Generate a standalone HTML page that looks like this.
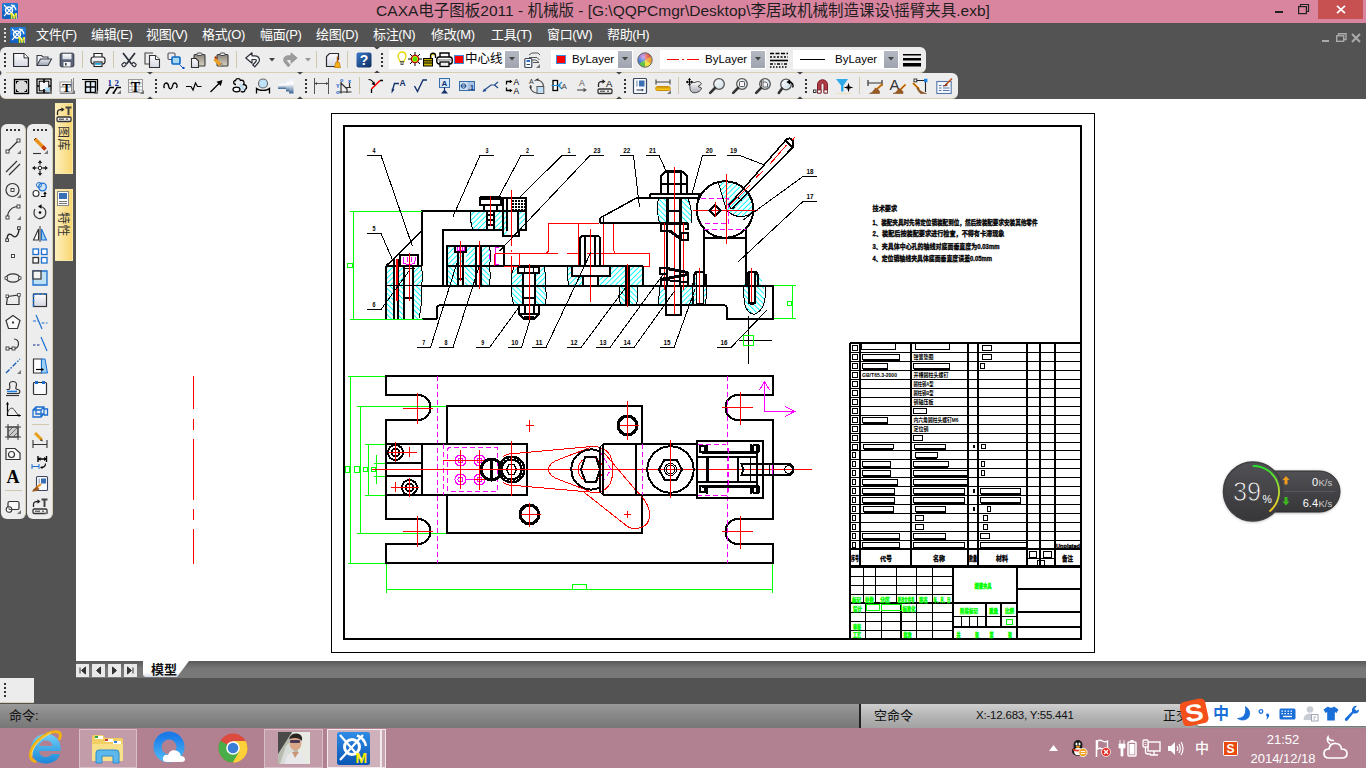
<!DOCTYPE html>
<html lang="zh-CN">
<head>
<meta charset="utf-8">
<title>CAXA电子图板2011 - 机械版</title>
<style>
*{margin:0;padding:0;box-sizing:border-box}
html,body{width:1366px;height:768px;overflow:hidden;background:#535353;font-family:"Liberation Sans","Noto Sans CJK SC",sans-serif}
.abs{position:absolute}
#title{position:absolute;left:0;top:0;width:1366px;height:23px;background:#d9859f}
#title .txt{position:absolute;left:0;width:1366px;top:0;height:23px;line-height:22px;text-align:center;font-size:15.5px;color:#1e1e1e;white-space:nowrap}
#menu{position:absolute;left:0;top:23px;width:1366px;height:24px;background:#535353;color:#fff;font-size:13px}
#menu span{position:absolute;top:0;line-height:23px;white-space:nowrap;letter-spacing:-.35px}
.tb{position:absolute;background:#ededed;border-radius:5px}
#canvas{position:absolute;left:76px;top:99px;width:1290px;height:562px;background:#fff}
#left{position:absolute;left:0;top:99px;width:76px;height:580px;background:#535353}
#tabs{position:absolute;left:76px;top:661px;width:1290px;height:17px;background:linear-gradient(#5a5a5a,#777 45%,#787878)}
#dark{position:absolute;left:0;top:678px;width:1366px;height:26px;background:#535353}
#cmd{position:absolute;left:0;top:704px;width:1366px;height:24px;background:linear-gradient(#9a9a9a,#8a8a8a 40%,#777)}
#task{position:absolute;left:0;top:728px;width:1366px;height:40px;background:#b18191}
</style>
</head>
<body>
<div id="canvas"></div><div id="left"></div>
<svg class="abs" style="left:76px;top:99px" width="1290" height="562" viewBox="76 99 1290 562" shape-rendering="crispEdges" font-family="Liberation Sans,Noto Sans CJK SC,sans-serif">
<style>
.k2{stroke:#000;stroke-width:2;fill:none}
.k3{stroke:#000;stroke-width:3;fill:none}
.kd{stroke:#000;stroke-width:1.5;fill:none}
.k1{stroke:#000;stroke-width:1;fill:none}
.r{stroke:#f00;stroke-width:1;fill:none}
.g{stroke:#0f0;stroke-width:1;fill:none}
.m{stroke:#f0f;stroke-width:1;fill:none;stroke-dasharray:5 3}
.ms{stroke:#f0f;stroke-width:1;fill:none}
.c{stroke:#0ff;stroke-width:1;fill:none}
.w{fill:#fff;stroke:none}
</style>
<defs>
<pattern id="h1" width="3.7" height="3.7" patternUnits="userSpaceOnUse" patternTransform="rotate(-45)"><rect width="3.7" height="3.7" fill="#fff"/><path d="M0 .5H3.7" stroke="#0ff" stroke-width="1"/></pattern>
<pattern id="h2" width="3.7" height="3.7" patternUnits="userSpaceOnUse" patternTransform="rotate(45)"><rect width="3.7" height="3.7" fill="#fff"/><path d="M0 .5H3.7" stroke="#0ff" stroke-width="1"/></pattern>
<pattern id="kn" width="3" height="3" patternUnits="userSpaceOnUse"><rect width="3" height="3" fill="#000"/><path d="M0 1.500L1.500 0L3 1.500L1.500 3Z" fill="#fff"/></pattern>
</defs>
<rect x="331.5" y="113.5" width="763" height="539" class="k1"/>
<rect x="344" y="126" width="737" height="513" class="k2"/>
<path class="r" d="M193.5 375.8 L193.5 409.3"/>
<path class="r" d="M193.5 418.7 L193.5 429.6"/>
<path class="r" d="M193.5 438.8 L193.5 499.8"/>
<path class="r" d="M193.5 509 L193.5 519.9"/>
<path class="r" d="M193.5 529 L193.5 564"/>
<path d="M386 266H394V285H386Z M398 266H404V285H398Z M413 266H420Q423 276 421 285H413Z" fill="url(#h1)" stroke="none" />
<path d="M386 286H394V319H386Z M398 286H404V319H398Z M413 286H421Q422 300 418 319H413Z" fill="url(#h2)" stroke="none" />
<path d="M471 212H487V230H473Q470 221 471 212Z M494 212H502V230H494Z M502 212H507V236H502Z M518 211H525V230H519V236H518Z" fill="url(#h1)" stroke="none" />
<path d="M447 246H455V252H462V266H447Z M466 252V246H476V266H466Z M481 246H489Q492 256 489 266H481Z" fill="url(#h1)" stroke="none" />
<path d="M447 267H458V285H447Z M465 267H476V285H465Z M481 267H489Q491 276 489 285H481Z" fill="url(#h2)" stroke="none" />
<path d="M514 267H518V273H523V285H512Q510 276 514 267Z M539 267H544Q546 276 545 285H535V273H539Z" fill="url(#h1)" stroke="none" />
<path d="M512 286H523V305H514Q511 296 512 286Z M535 286H545Q547 296 545 305H535Z" fill="url(#h2)" stroke="none" />
<path d="M568 267H572V276H583V285H569Q567 276 568 267Z M610 267H626V285H598V276H610Z M629 267H643V285H629Z" fill="url(#h1)" stroke="none" />
<path d="M620 286H626V305H621Q618 296 620 286Z M629 286H637Q639 296 636 305H629Z" fill="url(#h2)" stroke="none" />
<path d="M659 198H667V223H660Q656 210 659 198Z M681 198H688Q693 210 692 223H681Z" fill="url(#h2)" stroke="none" />
<path d="M660 286H666V305H659Z M681 286H692V305H681Z" fill="url(#h1)" stroke="none" />
<path d="M694 274H696V303H699.500V305H694Q692 290 694 274Z M704 274H706Q708 290 705 305H700.500V303H704Z" fill="url(#h1)" stroke="none" />
<path d="M746 274H749V303H755V274H758Q766 285 764 303Q760 313 751 315Q744 308 744 295Q744 282 746 274Z" fill="url(#h2)" stroke="none" />
<clipPath id="camclip"><circle cx="725" cy="209.500" r="27.500"/></clipPath>
<path d="M726.500 210.500L718.500 181H760V213Q745 222 726.500 210.500Z" fill="url(#h1)" stroke="none" clip-path="url(#camclip)"/>
<path class="g" d="M772 285.5 L796 285.5"/>
<path class="g" d="M772 318.5 L796 318.5"/>
<path class="g" d="M792.5 285 L792.5 319"/>
<rect class="g" x="787.5" y="301.5" width="4" height="4" />
<path class="kd" d="M386 266 L422 231"/>
<path class="k2" d="M422 266 L422 211 L526 211"/>
<path class="k1" d="M421 267Q424 276 421.500 285Q423 300 419 318" />
<path class="k2" d="M422 266 L400 266"/>
<path class="k2" d="M386 266 L386 319"/>
<path class="k2" d="M386 266 L400 266"/>
<path class="k2" d="M443 285 L443 230 L502 230"/>
<path class="k2" d="M422 319 L437 319"/>
<path class="k2" d="M400 266 L400 255 L418 255 L418 266"/>
<path class="ms" d="M403 257V261Q403 264 406 264H412Q415 264 415 261V257 M407 257V262 M411 257V262" />
<path class="k2" d="M404 266 L404 319"/>
<path class="k2" d="M413 266 L413 319"/>
<path class="k2" d="M404 297.5 L413 297.5"/>
<path class="k1" d="M402.5 268.5 L415 268.5"/>
<path class="r" d="M409.5 253 L409.5 301"/>
<path class="k2" d="M394 259 L394 319"/>
<path class="k2" d="M398 259 L398 319"/>
<path class="r" d="M396 259 L396 301"/>
<path class="r" d="M397 259 L397 301"/>
<path class="k1" d="M386 285.5 L421 285.5"/>
<path class="k2" d="M421 286 L773 286"/>
<path class="k2" d="M773 285 L773 319 L727 319 L727 308"/>
<path class="k2" d="M727 309Q727 305 723 305H441Q437 305 437 309V319" />
<path class="k2" d="M447 285 L447 246 L504 246 L504 266"/>
<path class="k2" d="M447 266 L643 266"/>
<path class="k2" d="M455 246 L455 252 L466 252 L466 246"/>
<path class="k2" d="M458 252 L458 285"/>
<path class="k2" d="M463 252 L463 285"/>
<path class="k2" d="M458 279 L463 279"/>
<path class="ms" d="M457 247V250H464V247M459 247V250M462 247V250" />
<path class="r" d="M460.5 241 L460.5 281"/>
<path class="k2" d="M476 246 L476 285"/>
<path class="k2" d="M481 246 L481 285"/>
<path class="r" d="M479.5 241 L479.5 289"/>
<path class="ms" d="M495.5 247.5 L495.5 264.5"/>
<path class="ms" d="M495 247.5 L499 247.5"/>
<path class="ms" d="M495 264.5 L499 264.5"/>
<path class="m" d="M489.5 246 L489.5 266"/>
<path class="k2" d="M480 199 L501 199 L501 205 L480 205 L480 199"/>
<path class="k2" d="M480 199Q480 197 482 197H499Q501 197 501 199" />
<path class="k2" d="M484 205 L484 211"/>
<path class="k2" d="M497 205 L497 211"/>
<path class="k2" d="M487 211 L487 230"/>
<path class="k2" d="M494 211 L494 230"/>
<path class="k2" d="M487 215 L494 215"/>
<path class="k2" d="M487 220 L494 220"/>
<path class="k2" d="M487 225 L494 225"/>
<path class="r" d="M490.5 196 L490.5 226"/>
<path class="k2" d="M502 198 L526 198 L526 230 L519 230 L519 236 L503 236 L503 198"/>
<rect x="512" y="199" width="13" height="11" fill="url(#kn)"/>
<path class="k2" d="M507 198 L507 231"/>
<path class="k2" d="M518 211 L518 231"/>
<path class="k2" d="M512 211 L525 211"/>
<path class="r" d="M511.5 190 L511.5 246"/>
<path class="r" d="M511.5 250 L511.5 252"/>
<path class="r" d="M511.5 256 L511.5 273"/>
<path class="r" d="M548.5 251.5 L548.5 223.5 L599 223.5"/>
<path class="r" d="M578.5 223.5 L578.5 265"/>
<path class="r" d="M603.5 223.5 L603.5 265"/>
<path class="r" d="M613.5 223.5 L613.5 251"/>
<path class="r" d="M548.500 250L546.500 253.500 M613.500 250L615.500 253.500" />
<path class="r" d="M494.5 253.5 L557.5 253.5"/>
<path class="r" d="M567 253.5 L578 253.5"/>
<path class="r" d="M587 253.5 L649.5 253.5 L649.5 266.5 L643 266.5"/>
<path class="r" d="M494.5 253.5 L494.5 266"/>
<path class="r" d="M503.5 266.5 L519.5 266.5 L519.5 253.5"/>
<path class="k2" d="M580 266V239Q580 236 583 236H597Q600 236 600 239V266 M585 237V266 M594.500 237V266" />
<path class="r" d="M590.5 229 L590.5 302"/>
<path class="k2" d="M572 266 L572 276 L610 276 L610 266"/>
<path class="k2" d="M583 276 L583 285"/>
<path class="k2" d="M598 276 L598 285"/>
<path class="k2" d="M643 266 L643 285"/>
<path class="k2" d="M626 266 L626 305"/>
<path class="k2" d="M629 266 L629 305"/>
<path class="r" d="M627.5 264 L627.5 307"/>
<path class="k2" d="M518 267 L539 267 L539 273 L518 273 L518 267"/>
<path class="k1" d="M524.5 267 L524.5 273"/>
<path class="k1" d="M533.5 267 L533.5 273"/>
<path class="k2" d="M523 273 L523 305"/>
<path class="k2" d="M535 273 L535 305"/>
<path class="k2" d="M523 297.5 L535 297.5"/>
<path class="k2" d="M519 305 L519 314 L524 319 L534 319 L539 314 L539 305"/>
<path class="k2" d="M524.5 305 L524.5 314"/>
<path class="k2" d="M534 305 L534 314"/>
<path class="k2" d="M519 314 L539 314"/>
<path class="k2" d="M524 317H534" />
<path class="r" d="M529.5 264 L529.5 322"/>
<path class="k2" d="M600 223 L600 218"/>
<path class="kd" d="M600 218 L636.5 198"/>
<path class="k2" d="M636 198 L650 198"/>
<path class="k2" d="M600 223 L660 223"/>
<path class="k1" d="M603.5 217 L603.5 223"/>
<path class="k1" d="M658.500 198Q656 210 659.500 223 M688 198Q692 210 692 223" />
<path class="k2" d="M650 194 L699 194 L699 198 L650 198 L650 194"/>
<path class="k2" d="M661 194V176L665 172H683L687 176V194 M667.500 172V194 M681 172V194 M661 183.500H687" />
<path class="k3" d="M666 171 L682 171"/>
<path class="r" d="M674.5 167 L674.5 316"/>
<path class="k3" d="M667.5 198 L667.5 223"/>
<path class="k3" d="M680.5 198 L680.5 223"/>
<path class="k2" d="M667 223 L667 286"/>
<path class="k2" d="M680 223 L680 286"/>
<path class="k3" d="M660 223.5 L688 223.5"/>
<path class="k2" d="M667 211 L681 211"/>
<path class="r" d="M664.5 223 L664.5 290"/>
<path class="r" d="M683.5 223 L683.5 290"/>
<path class="k2" d="M666 286 L666 315 L681 315 L681 286"/>
<path class="k2" d="M660.500 223V231H670 M687.500 223V229H685" />
<path class="k3" d="M669 230.500L680.500 238.500" />
<rect class="k2" x="681" y="233" width="7" height="7" fill="url(#h1)"/>
<rect class="k2" x="660" y="267.5" width="7" height="6.5" fill="url(#h1)"/>
<path class="k3" d="M667 268.500L687.500 272.500" />
<path class="k3" d="M687.500 274.500L661 279.500" />
<path class="k2" d="M661 279.500L687.500 282.500" />
<path class="k2" d="M687.5 272 L687.5 286"/>
<path class="k2" d="M660.5 278 L660.5 286"/>
<circle class="k2" cx="725" cy="209.5" r="28.3" />
<path class="k2" d="M704 229 L704 286"/>
<path class="k2" d="M746 229 L746 286"/>
<path class="k2" d="M704 238 L746 238"/>
<path class="k1" d="M726.5 210.5 L718.5 183"/>
<path class="k1" d="M726.500 210.500Q740 222 753 212" />
<path class="m" d="M700.5 198.5 L728.5 198.5 L728.5 223.5 L701 223.5"/>
<path class="m" d="M704 229.5 L746 229.5"/>
<path class="r" d="M726.5 174 L726.5 244"/>
<path class="r" d="M693 210.5 L758 210.5"/>
<path class="k2" d="M715 205L720.500 210.500L715 216L709.500 210.500Z" fill="url(#h2)" stroke-width="1.500"/>
<path class="r" d="M715.5 202 L715.5 217"/>
<path class="kd" d="M729 205 L785.5 140.5"/>
<path class="kd" d="M733 208 L792.5 147.5"/>
<path class="k2" d="M785.500 140.500Q790 136 793 141L792.500 148 M785.500 140.500L792.500 148" />
<path class="k1" d="M729 205L731 209L734 208.500" />
<path class="r" d="M730 205L750 185M756 177.500L763.500 170.500M770 164L786.500 145M792.500 140L794.500 137.500" />
<path class="k1" d="M738 197.5 L742 201"/>
<path class="k2" d="M694 286V275L696 272H703L705 275V286" />
<path class="k1" d="M696.500 273V303H703.500V273 M696.500 303L700 305L703.500 303" />
<path class="r" d="M699.5 268 L699.5 303"/>
<path class="k2" d="M747 286V275L749 272H756L758 275V286" />
<path class="k2" d="M749 273V303H755V273" />
<path class="k1" d="M749 303L752 305L755 303" />
<path class="r" d="M751.5 268 L751.5 302"/>
<path class="k1" d="M744 286Q743 300 746 308Q750 315 755 314Q764 310 765 298V286" />
<path class="g" d="M350 211.5 L422 211.5"/>
<path class="g" d="M350 319.5 L423 319.5"/>
<path class="g" d="M353.5 211 L353.5 319"/>
<rect class="g" x="347.5" y="263.5" width="5" height="4" />
<path class="k1" d="M489 246Q492.500 256 489 266Q491.500 276 489 285" />
<path class="k1" d="M514 267Q510 276 512 285Q510.500 296 514 305 M544 267Q546.500 276 545 285Q547.500 296 545 305" />
<path class="k1" d="M568 267Q566.500 276 569 285" />
<path class="k1" d="M620 286Q617.500 296 621 305 M637 286Q639.500 296 636 305" />
<path class="k1" d="M660 286Q658.500 296 659 305 M692 286Q693 296 692 305" />
<path class="k1" d="M694 274Q691.500 290 694 305 M706 274Q708.500 290 705 305" />
<path class="k1" d="M471 212Q469.500 221 473 230" />
<path class="k1" d="M367 155.5 L381 155.5"/>
<path class="k1" d="M381 155.5 L412.5 246.5"/>
<text x="374" y="153" font-size="7" fill="#000" text-anchor="middle" font-weight="bold" textLength="3" lengthAdjust="spacingAndGlyphs">4</text>
<path class="k1" d="M480 155.5 L494 155.5"/>
<path class="k1" d="M480 155.5 L453 216.5"/>
<text x="487" y="153" font-size="7" fill="#000" text-anchor="middle" font-weight="bold" textLength="3" lengthAdjust="spacingAndGlyphs">3</text>
<path class="k1" d="M521 155.5 L534 155.5"/>
<path class="k1" d="M521 155.5 L498 198.5"/>
<text x="527.5" y="153" font-size="7" fill="#000" text-anchor="middle" font-weight="bold" textLength="3" lengthAdjust="spacingAndGlyphs">2</text>
<path class="k1" d="M562 155.5 L576 155.5"/>
<path class="k1" d="M562 155.5 L520 197"/>
<text x="569" y="153" font-size="7" fill="#000" text-anchor="middle" font-weight="bold" textLength="3" lengthAdjust="spacingAndGlyphs">1</text>
<path class="k1" d="M590 155.5 L604 155.5"/>
<path class="k1" d="M590 155.5 L499.5 251"/>
<text x="597" y="153" font-size="7" fill="#000" text-anchor="middle" font-weight="bold" textLength="7" lengthAdjust="spacingAndGlyphs">23</text>
<path class="k1" d="M620 155.5 L633.5 155.5"/>
<path class="k1" d="M633.5 155.5 L639.5 207.5"/>
<text x="626.75" y="153" font-size="7" fill="#000" text-anchor="middle" font-weight="bold" textLength="7" lengthAdjust="spacingAndGlyphs">22</text>
<path class="k1" d="M646 155.5 L659 155.5"/>
<path class="k1" d="M659 155.5 L666 171"/>
<text x="652.5" y="153" font-size="7" fill="#000" text-anchor="middle" font-weight="bold" textLength="7" lengthAdjust="spacingAndGlyphs">21</text>
<path class="k1" d="M702.5 155.5 L716 155.5"/>
<path class="k1" d="M702.5 155.5 L692 194"/>
<text x="709.25" y="153" font-size="7" fill="#000" text-anchor="middle" font-weight="bold" textLength="7" lengthAdjust="spacingAndGlyphs">20</text>
<path class="k1" d="M727 155.5 L740 155.5"/>
<path class="k1" d="M740 155.5 L763 164.5"/>
<text x="733.5" y="153" font-size="7" fill="#000" text-anchor="middle" font-weight="bold" textLength="7" lengthAdjust="spacingAndGlyphs">19</text>
<path class="k1" d="M803 176.5 L817 176.5"/>
<path class="k1" d="M803 176.5 L743 220"/>
<text x="810" y="174" font-size="7" fill="#000" text-anchor="middle" font-weight="bold" textLength="7" lengthAdjust="spacingAndGlyphs">18</text>
<path class="k1" d="M803 201.5 L817 201.5"/>
<path class="k1" d="M803 201.5 L738.5 261.5"/>
<text x="810" y="199" font-size="7" fill="#000" text-anchor="middle" font-weight="bold" textLength="7" lengthAdjust="spacingAndGlyphs">17</text>
<path class="k1" d="M367 233.5 L381 233.5"/>
<path class="k1" d="M381 233.5 L392 258.5"/>
<text x="374" y="231" font-size="7" fill="#000" text-anchor="middle" font-weight="bold" textLength="3" lengthAdjust="spacingAndGlyphs">5</text>
<path class="k1" d="M367 309.5 L381 309.5"/>
<path class="k1" d="M381 309.5 L409 271"/>
<text x="374" y="307" font-size="7" fill="#000" text-anchor="middle" font-weight="bold" textLength="3" lengthAdjust="spacingAndGlyphs">6</text>
<path class="k1" d="M417 347.5 L430.5 347.5"/>
<path class="k1" d="M430.5 347.5 L458.5 258"/>
<text x="423.75" y="345" font-size="7" fill="#000" text-anchor="middle" font-weight="bold" textLength="3" lengthAdjust="spacingAndGlyphs">7</text>
<path class="k1" d="M439 347.5 L453 347.5"/>
<path class="k1" d="M453 347.5 L479.5 265.5"/>
<text x="446" y="345" font-size="7" fill="#000" text-anchor="middle" font-weight="bold" textLength="3" lengthAdjust="spacingAndGlyphs">8</text>
<path class="k1" d="M476 347.5 L489.5 347.5"/>
<path class="k1" d="M489.5 347.5 L518 308.5"/>
<text x="482.75" y="345" font-size="7" fill="#000" text-anchor="middle" font-weight="bold" textLength="3" lengthAdjust="spacingAndGlyphs">9</text>
<path class="k1" d="M508 347.5 L521.5 347.5"/>
<path class="k1" d="M521.5 347.5 L530 320"/>
<text x="514.75" y="345" font-size="7" fill="#000" text-anchor="middle" font-weight="bold" textLength="7" lengthAdjust="spacingAndGlyphs">10</text>
<path class="k1" d="M532 347.5 L546 347.5"/>
<path class="k1" d="M546 347.5 L591 252"/>
<text x="539" y="345" font-size="7" fill="#000" text-anchor="middle" font-weight="bold" textLength="7" lengthAdjust="spacingAndGlyphs">11</text>
<path class="k1" d="M567 347.5 L581 347.5"/>
<path class="k1" d="M581 347.5 L626.5 286.5"/>
<text x="574" y="345" font-size="7" fill="#000" text-anchor="middle" font-weight="bold" textLength="7" lengthAdjust="spacingAndGlyphs">12</text>
<path class="k1" d="M596 347.5 L610 347.5"/>
<path class="k1" d="M610 347.5 L665 272"/>
<text x="603" y="345" font-size="7" fill="#000" text-anchor="middle" font-weight="bold" textLength="7" lengthAdjust="spacingAndGlyphs">13</text>
<path class="k1" d="M620 347.5 L634 347.5"/>
<path class="k1" d="M634 347.5 L674.5 291"/>
<text x="627" y="345" font-size="7" fill="#000" text-anchor="middle" font-weight="bold" textLength="7" lengthAdjust="spacingAndGlyphs">14</text>
<path class="k1" d="M660 347.5 L674 347.5"/>
<path class="k1" d="M674 347.5 L695 289.5"/>
<text x="667" y="345" font-size="7" fill="#000" text-anchor="middle" font-weight="bold" textLength="7" lengthAdjust="spacingAndGlyphs">15</text>
<path class="k1" d="M717 347.5 L731 347.5"/>
<path class="k1" d="M731 347.5 L766.5 310.5"/>
<text x="724" y="345" font-size="7" fill="#000" text-anchor="middle" font-weight="bold" textLength="7" lengthAdjust="spacingAndGlyphs">16</text>
<path class="k1" d="M748.5 316 L748.5 364"/>
<path class="k1" d="M738.5 340.5 L772 340.5"/>
<rect class="g" x="743.5" y="335.5" width="10" height="10" />
<path class="g" d="M348 376.5 L386 376.5"/>
<path class="g" d="M348 563.5 L386 563.5"/>
<path class="g" d="M350.5 376 L350.5 563"/>
<path class="g" d="M357 406.5 L457 406.5"/>
<path class="g" d="M357 533.5 L447 533.5"/>
<path class="g" d="M360.5 406 L360.5 533"/>
<path class="g" d="M365 444.5 L386 444.5"/>
<path class="g" d="M365 495.5 L386 495.5"/>
<path class="g" d="M368.5 444 L368.5 495"/>
<path class="g" d="M374 463.5 L386 463.5"/>
<path class="g" d="M374 476.5 L386 476.5"/>
<path class="g" d="M376.5 455 L376.5 484"/>
<rect class="g" x="345.5" y="466.5" width="4" height="6" />
<rect class="g" x="354.5" y="466.5" width="5" height="6" />
<rect class="g" x="363.5" y="467.5" width="4" height="4" />
<rect class="g" x="371.5" y="467.5" width="4" height="4" />
<path class="g" d="M386.5 563 L386.5 593"/>
<path class="g" d="M772.5 563 L772.5 593"/>
<path class="g" d="M386 589.5 L773 589.5"/>
<rect class="g" x="572.5" y="584.5" width="14" height="5" />
<path class="k2" d="M386 376H773V395H738A12.500 12.500 0 0 0 738 420H773V519H738A12.500 12.500 0 0 0 738 544H773V563H386V544H418A12.500 12.500 0 0 0 418 519H386V420H418A12.500 12.500 0 0 0 418 395H386Z" />
<path class="r" d="M417.5 392.5 L417.5 423.5"/>
<path class="r" d="M402.5 408.5 L432.5 408.5"/>
<path class="r" d="M417.5 515.5 L417.5 546.5"/>
<path class="r" d="M402.5 531.5 L432.5 531.5"/>
<path class="r" d="M740.5 391.5 L740.5 424.5"/>
<path class="r" d="M721.5 407.5 L752.5 407.5"/>
<path class="r" d="M740.5 515.5 L740.5 548.5"/>
<path class="r" d="M721.5 531.5 L752.5 531.5"/>
<path class="m" d="M437.5 376 L437.5 563"/>
<path class="m" d="M727.5 376 L727.5 563"/>
<path class="k2" d="M447 444V406H642V444 M642 495V533H447V495" />
<path class="k2" d="M386 444 L527 444 L527 495 L386 495"/>
<path class="k2" d="M422 444 L422 495"/>
<path class="k2" d="M386 463 L422 463"/>
<path class="k2" d="M386 475.5 L422 475.5"/>
<circle class="k2" cx="395.5" cy="452.5" r="7.5" />
<circle class="k2" cx="395.5" cy="452.5" r="3.8" />
<circle class="k2" cx="409.5" cy="487.5" r="7.5" />
<circle class="k2" cx="409.5" cy="487.5" r="3.8" />
<path class="r" d="M388 452.5 L417 452.5"/>
<path class="r" d="M395.5 442 L395.5 462"/>
<path class="r" d="M409.5 447 L409.5 457"/>
<path class="r" d="M391 487.5 L419 487.5"/>
<path class="r" d="M409.5 478 L409.5 497"/>
<path class="r" d="M395.5 482 L395.5 492"/>
<path class="m" d="M447.500 450Q447.500 447.500 450 447.500H497V491.500H450Q447.500 491.500 447.500 489Z" />
<path class="m" d="M443.5 444 L443.5 495"/>
<circle class="ms" cx="460.5" cy="460.5" r="5.5" />
<circle class="ms" cx="460.5" cy="460.5" r="2.5" />
<circle class="ms" cx="479.5" cy="460.5" r="5.5" />
<circle class="ms" cx="479.5" cy="460.5" r="2.5" />
<circle class="ms" cx="460.5" cy="479.5" r="5.5" />
<circle class="ms" cx="460.5" cy="479.5" r="2.5" />
<circle class="ms" cx="479.5" cy="479.5" r="5.5" />
<circle class="ms" cx="479.5" cy="479.5" r="2.5" />
<path class="r" d="M460.5 450 L460.5 489"/>
<path class="r" d="M479.5 450 L479.5 490"/>
<path class="r" d="M443 460.5 L484 460.5"/>
<path class="r" d="M470 479.5 L490 479.5"/>
<path class="ms" d="M466 479.5 L474 479.5"/>
<circle class="k3" cx="491.5" cy="469.5" r="10.5" stroke-width="2.500"/>
<path class="k3" d="M491.5 459 L491.5 480"/>
<circle class="k2" cx="511.5" cy="469.5" r="13" />
<circle class="k1" cx="511.5" cy="469.5" r="11.5" stroke-dasharray="2 1.500"/>
<circle class="k2" cx="511.5" cy="469.5" r="10" />
<path class="k1" d="M506.500 469.500L509 464.500H514L516.500 469.500L514 474.500H509Z" />
<path class="r" d="M511.5 441 L511.5 496"/>
<path class="r" d="M371.5 469.5 L810 469.5"/>
<path class="r" d="M515 453.5 L592 446.5"/>
<path class="r" d="M515 485.5 L595.5 492.5"/>
<path class="r" d="M503 456.500Q511 452 518 453.500 M503 482.500Q511 487 518 485.500" />
<path class="r" d="M592 446.500Q604 446 610 455Q616 469.500 610 484Q604 493 595.500 492.500" />
<path class="r" d="M590.500 447.500L560 459Q548.500 463 548.500 469.500Q548.500 476 560 480L590.500 491.500" />
<circle class="r" cx="590.5" cy="469.5" r="12.3" />
<path class="r" d="M603 451.5 L636 490.5"/>
<path class="r" d="M582.5 491 L625 524.5"/>
<path class="r" d="M625 524.500Q629 528.500 635 528.500Q649.500 528 649.500 514.500Q649.500 503 636 490.500" />
<path class="r" d="M624 514.5 L631 514.5"/>
<path class="r" d="M627.5 511 L627.5 518"/>
<path class="r" d="M526 425.5 L534 425.5"/>
<path class="r" d="M529.5 420 L529.5 432"/>
<path class="k2" d="M600 451.500A20 20 0 1 0 600 487.500" />
<path class="k2" d="M600 469.500L596 456.500H585.500L581 469.500L585.500 482H596Z" />
<path class="m" d="M600 451.500L611 469.500L600 486.500" />
<circle class="k3" cx="627.5" cy="425.5" r="9.3" />
<circle class="k3" cx="529.5" cy="514.5" r="9.3" />
<path class="r" d="M627.5 401 L627.5 440"/>
<path class="r" d="M620 425.5 L639 425.5"/>
<path class="r" d="M529.5 503 L529.5 527"/>
<path class="r" d="M521 514.5 L541 514.5"/>
<path class="k2" d="M603 444 L697 444"/>
<path class="k2" d="M603 495 L697 495"/>
<path class="k2" d="M603 444 L603 495"/>
<path class="k2" d="M600 447 L600 492"/>
<path class="k1" d="M600 447 L603 444"/>
<path class="k1" d="M600 492 L603 495"/>
<path class="k2" d="M635.5 444 L635.5 495"/>
<path class="m" d="M642.5 444 L642.5 495"/>
<circle class="k2" cx="670.5" cy="469.5" r="23.2" stroke-width="1.500"/>
<path class="k2" d="M659 469.500L664.500 459.500H676.500L682 469.500L676.500 479.500H664.500Z" />
<circle class="k1" cx="670.5" cy="469.5" r="6" />
<circle class="k1" cx="670.5" cy="469.5" r="4.3" />
<path class="r" d="M670.5 440 L670.5 498"/>
<rect class="k2" x="697" y="440.5" width="65.5" height="57" />
<path class="k2" d="M697 457 L758 457"/>
<path class="k3" d="M702 452.5 L758 452.5"/>
<path class="k2" d="M697 482 L758 482"/>
<path class="k3" d="M702 486 L758 486"/>
<path class="k2" d="M707 444 L707 452"/>
<path class="k2" d="M707 486 L707 494"/>
<path class="k2" d="M751 444 L751 452"/>
<path class="k2" d="M751 486 L751 494"/>
<path class="k3" d="M707 457 L707 482"/>
<path class="k2" d="M738 457 L738 482"/>
<path class="k1" d="M750.5 457 L750.5 482"/>
<path class="k2" d="M757 445 L757 494"/>
<rect class="k2" x="700" y="446" width="5" height="6" />
<rect class="k2" x="700" y="486" width="5" height="6" />
<rect class="k2" x="753" y="445" width="6" height="7" rx="2"/>
<rect class="k2" x="753" y="486" width="6" height="7" rx="2"/>
<path class="k2" d="M741.500 464H788A5.300 5.300 0 0 1 788 475H741.500L743.500 469.500Z" />
<circle class="k1" cx="788.5" cy="469.5" r="3.8" />
<path class="k1" d="M756.5 464 L756.5 475"/>
<path class="k1" d="M763.5 464 L763.5 475"/>
<path class="k1" d="M769.5 464 L769.5 475"/>
<path class="m" d="M697.500 444.500H724Q728 444.500 728 448V492Q728 495.500 724 495.500H697.500" />
<path class="ms" d="M772.5 465 L772.5 474"/>
<path class="ms" d="M764.500 381.500V411.500H794.500 M759.500 390L764.500 381.500L769.500 390 M785 406.500L794.500 411.500L785 416.500" />
<path class="r" d="M810 469.5 L812 469.5"/>
<g font-weight="bold" stroke="#000" stroke-width=".3">
<text x="872.5" y="211.3" font-size="6.3" fill="#000" textLength="24.5" lengthAdjust="spacingAndGlyphs" >技术要求</text>
<text x="872.5" y="224.6" font-size="6.3" fill="#000" textLength="165" lengthAdjust="spacingAndGlyphs" >1、装配夹具时先将定位销装配到位，然后按装配要求安装其他零件</text>
<text x="872.5" y="236.3" font-size="6.3" fill="#000" textLength="132" lengthAdjust="spacingAndGlyphs" >2、装配后按装配要求进行检查，不得有卡滞现象</text>
<text x="872.5" y="248.6" font-size="6.3" fill="#000" textLength="127" lengthAdjust="spacingAndGlyphs" >3、夹具体中心孔的轴线对底面垂直度为0.03mm</text>
<text x="872.5" y="261" font-size="6.3" fill="#000" textLength="119.5" lengthAdjust="spacingAndGlyphs" >4、定位销轴线夹具体底面垂直度误差0.05mm</text>
</g>
<path class="k2" d="M850 343 L850 567"/>
<path class="k2" d="M860 343 L860 567"/>
<path class="k2" d="M911 343 L911 567"/>
<path class="k2" d="M968 343 L968 567"/>
<path class="k2" d="M978 343 L978 567"/>
<path class="k2" d="M1027 343 L1027 567"/>
<path class="k2" d="M1040 343 L1040 567"/>
<path class="k2" d="M1055 343 L1055 567"/>
<path class="k2" d="M850 343 L1081 343"/>
<path class="k1" d="M850 352.5 L1081 352.5"/>
<path class="k1" d="M850 361.5 L1081 361.5"/>
<path class="k1" d="M850 370.5 L1081 370.5"/>
<path class="k1" d="M850 379.5 L1081 379.5"/>
<path class="k1" d="M850 388.5 L1081 388.5"/>
<path class="k1" d="M850 397.5 L1081 397.5"/>
<path class="k1" d="M850 406.5 L1081 406.5"/>
<path class="k1" d="M850 415.5 L1081 415.5"/>
<path class="k1" d="M850 424.5 L1081 424.5"/>
<path class="k1" d="M850 433.5 L1081 433.5"/>
<path class="k1" d="M850 442.5 L1081 442.5"/>
<path class="k1" d="M850 450.5 L1081 450.5"/>
<path class="k1" d="M850 459.5 L1081 459.5"/>
<path class="k1" d="M850 468.5 L1081 468.5"/>
<path class="k1" d="M850 477.5 L1081 477.5"/>
<path class="k1" d="M850 486.5 L1081 486.5"/>
<path class="k1" d="M850 495.5 L1081 495.5"/>
<path class="k1" d="M850 504.5 L1081 504.5"/>
<path class="k1" d="M850 513.5 L1081 513.5"/>
<path class="k1" d="M850 522.5 L1081 522.5"/>
<path class="k1" d="M850 531.5 L1081 531.5"/>
<path class="k1" d="M850 540.5 L1081 540.5"/>
<path class="k1" d="M850 549.5 L1081 549.5"/>
<path class="k2" d="M850 549 L1081 549"/>
<path class="k3" d="M850 566.5 L1081 566.5"/>
<rect class="k1" x="852.5" y="345.5" width="5" height="5" />
<rect class="k1" x="852.5" y="354.5" width="5" height="5" />
<rect class="k1" x="852.5" y="363.5" width="5" height="5" />
<rect class="k1" x="852.5" y="372.5" width="5" height="5" />
<rect class="k1" x="852.5" y="381.5" width="5" height="5" />
<rect class="k1" x="852.5" y="390.5" width="5" height="5" />
<rect class="k1" x="852.5" y="399.5" width="5" height="5" />
<rect class="k1" x="852.5" y="408.5" width="5" height="5" />
<rect class="k1" x="852.5" y="417.5" width="5" height="5" />
<rect class="k1" x="852.5" y="426.5" width="5" height="5" />
<rect class="k1" x="852.5" y="435.5" width="5" height="5" />
<rect class="k1" x="852.5" y="444.5" width="5" height="5" />
<rect class="k1" x="852.5" y="452.5" width="3" height="5" />
<rect class="k1" x="852.5" y="461.5" width="3" height="5" />
<rect class="k1" x="852.5" y="470.5" width="3" height="5" />
<rect class="k1" x="852.5" y="479.5" width="3" height="5" />
<rect class="k1" x="852.5" y="488.5" width="3" height="5" />
<rect class="k1" x="852.5" y="497.5" width="3" height="5" />
<rect class="k1" x="852.5" y="506.5" width="3" height="5" />
<rect class="k1" x="852.5" y="515.5" width="3" height="5" />
<rect class="k1" x="852.5" y="524.5" width="3" height="5" />
<rect class="k1" x="852.5" y="533.5" width="3" height="5" />
<rect class="k1" x="852.5" y="542.5" width="3" height="5" />
<path class="k1" d="M861 343 L861 349.5 L895.5 349.5 L895.5 343"/>
<path class="k1" d="M915.5 343 L915.5 349.5 L949.5 349.5 L949.5 343"/>
<rect class="k1" x="982.5" y="345.5" width="8.5" height="5" />
<rect class="k1" x="862.5" y="354.5" width="37" height="5" />
<path class="k1" d="M862.5 360 L899.5 360"/>
<rect class="k1" x="982.5" y="354.5" width="8.5" height="5" />
<text x="913.5" y="359" font-size="6" fill="#000" textLength="20" lengthAdjust="spacingAndGlyphs" font-weight="bold">弹簧垫圈</text>
<rect class="k1" x="862.5" y="363.5" width="25" height="5" />
<path class="k1" d="M862.5 369 L887.5 369"/>
<rect class="k1" x="913.5" y="363.5" width="36" height="5" />
<path class="k1" d="M913.5 369 L949.5 369"/>
<rect class="k1" x="980.5" y="363.5" width="4" height="5" />
<text x="862" y="377" font-size="6" fill="#000" textLength="35" lengthAdjust="spacingAndGlyphs" font-weight="bold">GB/T65.3-2000</text>
<text x="913.5" y="377" font-size="6" fill="#000" textLength="35" lengthAdjust="spacingAndGlyphs" font-weight="bold">开槽圆柱头螺钉</text>
<text x="913.5" y="386" font-size="6" fill="#000" textLength="20" lengthAdjust="spacingAndGlyphs" font-weight="bold">圆柱销A型</text>
<text x="913.5" y="395" font-size="6" fill="#000" textLength="20" lengthAdjust="spacingAndGlyphs" font-weight="bold">圆柱销B型</text>
<text x="913.5" y="404" font-size="6" fill="#000" textLength="20" lengthAdjust="spacingAndGlyphs" font-weight="bold">销轴压板</text>
<rect class="k1" x="913.5" y="408.5" width="13" height="5" />
<rect class="k1" x="862.5" y="417.5" width="25" height="5" />
<path class="k1" d="M862.5 423 L887.5 423"/>
<text x="913.5" y="422" font-size="6" fill="#000" textLength="45" lengthAdjust="spacingAndGlyphs" font-weight="bold">内六角圆柱头螺钉M6</text>
<text x="913.5" y="431" font-size="6" fill="#000" textLength="15" lengthAdjust="spacingAndGlyphs" font-weight="bold">定位销</text>
<rect class="k1" x="913.5" y="435.5" width="8.5" height="5" />
<rect class="k1" x="863.5" y="444.5" width="29.5" height="4" />
<path class="k1" d="M863.5 449 L893 449"/>
<rect class="k1" x="914.5" y="444.5" width="31" height="4" />
<path class="k1" d="M914.5 449 L945.5 449"/>
<rect class="k1" x="981.5" y="444.5" width="4" height="4" />
<rect class="k1" x="973.5" y="445" width="1" height="2" fill="#000"/>
<rect class="k1" x="915.5" y="452.5" width="21.5" height="5" />
<path class="k1" d="M915.5 458 L937 458"/>
<rect class="k1" x="862.5" y="461.5" width="28" height="5" />
<path class="k1" d="M862.5 467 L890.5 467"/>
<rect class="k1" x="913.5" y="461.5" width="34.5" height="5" />
<path class="k1" d="M913.5 467 L948 467"/>
<rect class="k1" x="981.5" y="461.5" width="3" height="5" />
<rect class="k1" x="862.5" y="470.5" width="28" height="5" />
<path class="k1" d="M862.5 476 L890.5 476"/>
<rect class="k1" x="913.5" y="470.5" width="53.5" height="5" />
<path class="k1" d="M913.5 476 L967 476"/>
<rect class="k1" x="981.5" y="470.5" width="3" height="5" />
<rect class="k1" x="862.5" y="479.5" width="35" height="5" />
<path class="k1" d="M862.5 485 L897.5 485"/>
<rect class="k1" x="913.5" y="479.5" width="53.5" height="5" />
<path class="k1" d="M913.5 485 L967 485"/>
<rect class="k1" x="862.5" y="488.5" width="32" height="5" />
<path class="k1" d="M862.5 494 L894.5 494"/>
<rect class="k1" x="913.5" y="488.5" width="51" height="5" />
<path class="k1" d="M913.5 494 L964.5 494"/>
<rect class="k1" x="980.5" y="488.5" width="40" height="5" />
<path class="k1" d="M980.5 494 L1020.5 494"/>
<rect class="k1" x="973.5" y="489" width="1" height="3" fill="#000"/>
<rect class="k1" x="862.5" y="497.5" width="32" height="5" />
<path class="k1" d="M862.5 503 L894.5 503"/>
<rect class="k1" x="913.5" y="497.5" width="51" height="5" />
<path class="k1" d="M913.5 503 L964.5 503"/>
<rect class="k1" x="980.5" y="497.5" width="40" height="5" />
<path class="k1" d="M980.5 503 L1020.5 503"/>
<rect class="k1" x="863.5" y="506.5" width="30" height="5" />
<path class="k1" d="M863.5 512 L893.5 512"/>
<rect class="k1" x="915.5" y="506.5" width="30" height="5" />
<path class="k1" d="M915.5 512 L945.5 512"/>
<rect class="k1" x="987.5" y="506.5" width="3" height="5" />
<rect class="k1" x="973.5" y="507" width="1" height="3" fill="#000"/>
<rect class="k1" x="915.5" y="515.5" width="8" height="5" />
<rect class="k1" x="983.5" y="515.5" width="4" height="5" />
<rect class="k1" x="915.5" y="524.5" width="8" height="5" />
<rect class="k1" x="983.5" y="524.5" width="4" height="5" />
<rect class="k1" x="862.5" y="533.5" width="37" height="5" />
<path class="k1" d="M862.5 539 L899.5 539"/>
<rect class="k1" x="913.5" y="533.5" width="32" height="5" />
<path class="k1" d="M913.5 539 L945.5 539"/>
<rect class="k1" x="980.5" y="533.5" width="9" height="5" />
<rect class="k1" x="862.5" y="542.5" width="37" height="5" />
<path class="k1" d="M862.5 548 L899.5 548"/>
<rect class="k1" x="913.5" y="542.5" width="51" height="5" />
<path class="k1" d="M913.5 548 L964.5 548"/>
<rect class="k1" x="980.5" y="542.5" width="45.5" height="5" />
<path class="k1" d="M980.5 548 L1026 548"/>
<g font-weight="bold" stroke="#000" stroke-width=".3">
<text x="851" y="561" font-size="6.5" fill="#000" textLength="8" lengthAdjust="spacingAndGlyphs" >序号</text>
<text x="880" y="561" font-size="6.5" fill="#000" textLength="12" lengthAdjust="spacingAndGlyphs" >代号</text>
<text x="933" y="561" font-size="6.5" fill="#000" textLength="12" lengthAdjust="spacingAndGlyphs" >名称</text>
<text x="969" y="561" font-size="6.5" fill="#000" textLength="8" lengthAdjust="spacingAndGlyphs" >数量</text>
<text x="996" y="561" font-size="6.5" fill="#000" textLength="12" lengthAdjust="spacingAndGlyphs" >材料</text>
<text x="1062" y="561" font-size="6.5" fill="#000" textLength="11" lengthAdjust="spacingAndGlyphs" >备注</text>
<text x="1056" y="547.5" font-size="5.5" fill="#000" textLength="24" lengthAdjust="spacingAndGlyphs" >Unplated</text>
</g>
<path class="k1" d="M1056 548 L1081 548"/>
<path class="k1" d="M1027 558.5 L1055 558.5"/>
<rect class="k1" x="1029.5" y="551.5" width="7" height="6" />
<rect class="k1" x="1043.5" y="551.5" width="8" height="6" />
<rect class="k1" x="1037.5" y="560.5" width="7" height="5" />
<path class="k1" d="M850 576.5 L953 576.5"/>
<path class="k1" d="M850 585.5 L953 585.5"/>
<path class="k1" d="M850 594.5 L953 594.5"/>
<path class="k1" d="M850 612.5 L953 612.5"/>
<path class="k1" d="M850 621.5 L953 621.5"/>
<path class="k1" d="M850 630.5 L953 630.5"/>
<path class="k2" d="M850 603 L953 603"/>
<path class="k1" d="M863.5 567 L863.5 603"/>
<path class="k1" d="M875.5 567 L875.5 603"/>
<path class="k1" d="M896.5 567 L896.5 603"/>
<path class="k1" d="M865.5 603 L865.5 638"/>
<path class="k1" d="M881.5 603 L881.5 638"/>
<path class="k2" d="M901 603 L901 638"/>
<path class="k1" d="M916.5 567 L916.5 638"/>
<path class="k1" d="M932.5 567 L932.5 638"/>
<path class="k2" d="M953 567 L953 638"/>
<path class="k2" d="M1017 567 L1017 638"/>
<path class="k2" d="M850 567 L850 638"/>
<path class="k2" d="M953 603 L1017 603"/>
<path class="k2" d="M953 627 L1017 627"/>
<path class="k2" d="M986 603 L986 627"/>
<path class="k2" d="M1001 603 L1001 627"/>
<path class="k1" d="M953 616.5 L1017 616.5"/>
<path class="k1" d="M961.5 617 L961.5 627"/>
<path class="k1" d="M969.5 617 L969.5 627"/>
<path class="k1" d="M977.5 617 L977.5 627"/>
<path class="k2" d="M1017 589 L1081 589"/>
<path class="k2" d="M1017 612 L1081 612"/>
<path class="k2" d="M1017 627 L1081 627"/>
<g font-weight="bold" stroke="#0f0" stroke-width=".4">
<text x="852" y="601.5" font-size="5.5" fill="#0f0" textLength="9" lengthAdjust="spacingAndGlyphs" >标记</text>
<text x="865" y="601.5" font-size="5.5" fill="#0f0" textLength="9" lengthAdjust="spacingAndGlyphs" >处数</text>
<text x="880" y="601.5" font-size="5.5" fill="#0f0" textLength="10" lengthAdjust="spacingAndGlyphs" >分区</text>
<text x="897.5" y="601.5" font-size="5.5" fill="#0f0" textLength="17" lengthAdjust="spacingAndGlyphs" >更改文件号</text>
<text x="919" y="601.5" font-size="5.5" fill="#0f0" textLength="9" lengthAdjust="spacingAndGlyphs" >签名</text>
<text x="933.5" y="601.5" font-size="5.5" fill="#0f0" textLength="17" lengthAdjust="spacingAndGlyphs" >年、月、日</text>
<text x="853" y="610.5" font-size="5.5" fill="#0f0" textLength="9" lengthAdjust="spacingAndGlyphs" >设计</text>
<text x="902.5" y="610.5" font-size="5.5" fill="#0f0" textLength="13" lengthAdjust="spacingAndGlyphs" >标准化</text>
<text x="853" y="629" font-size="5.5" fill="#0f0" textLength="8" lengthAdjust="spacingAndGlyphs" >审核</text>
<text x="853" y="637" font-size="5.5" fill="#0f0" textLength="8" lengthAdjust="spacingAndGlyphs" >工艺</text>
<text x="903.5" y="637" font-size="5.5" fill="#0f0" textLength="8" lengthAdjust="spacingAndGlyphs" >批准</text>
<text x="974.5" y="588" font-size="6" fill="#0f0" textLength="17" lengthAdjust="spacingAndGlyphs" >摇臂夹具</text>
<text x="960" y="613" font-size="5.5" fill="#0f0" textLength="18" lengthAdjust="spacingAndGlyphs" >阶段标记</text>
<text x="989" y="613" font-size="5.5" fill="#0f0" textLength="9" lengthAdjust="spacingAndGlyphs" >重量</text>
<text x="1005" y="613" font-size="5.5" fill="#0f0" textLength="9" lengthAdjust="spacingAndGlyphs" >比例</text>
<text x="956.5" y="636.5" font-size="5.5" fill="#0f0" textLength="4" lengthAdjust="spacingAndGlyphs" >共</text>
<text x="975" y="636.5" font-size="5.5" fill="#0f0" textLength="4" lengthAdjust="spacingAndGlyphs" >张</text>
<text x="989.5" y="636.5" font-size="5.5" fill="#0f0" textLength="4" lengthAdjust="spacingAndGlyphs" >第</text>
<text x="1008" y="636.5" font-size="5.5" fill="#0f0" textLength="4" lengthAdjust="spacingAndGlyphs" >张</text>
</g>
<rect class="g" x="866.5" y="604.5" width="13" height="6" />
<rect class="g" x="881.5" y="604.5" width="19.5" height="6" />
<rect class="g" x="1006.5" y="619.5" width="6" height="5" />
</svg><div id="title">
<svg class="abs" style="left:2px;top:3px" width="16" height="16" viewBox="0 0 16 16"><rect x="0" y="0" width="16" height="16" rx="1.5" fill="#1162c4"/><rect x="0" y="0" width="16" height="8" rx="1.5" fill="#2b86e0" opacity=".6"/><circle cx="7" cy="7.5" r="3.4" fill="none" stroke="#fff" stroke-width="1.5"/><path d="M2 2 L12.5 13 M2 13 L12.5 2" stroke="#fff" stroke-width="1.1" fill="none"/><path d="M9 1.8 A7 7 0 0 1 14 7" stroke="#fff" stroke-width="1.2" fill="none"/><text x="8.2" y="15.6" font-family="Liberation Sans,sans-serif" font-weight="bold" font-size="8.5" fill="#ffee00">M</text></svg>
<div class="txt">CAXA电子图板2011 - 机械版 - [G:\QQPCmgr\Desktop\李居政机械制造课设\摇臂夹具.exb]</div>
<div class="abs" style="left:1275px;top:11px;width:8px;height:2px;background:#222"></div>
<svg class="abs" style="left:1298px;top:4px" width="12" height="11" viewBox="0 0 12 11"><path d="M2.5 2.5V.5H10.5V7.5H8.5" fill="none" stroke="#222" stroke-width="1.2"/><rect x=".6" y="2.6" width="7.8" height="7" fill="none" stroke="#222" stroke-width="1.2"/></svg>
<div class="abs" style="left:1318px;top:0;width:45px;height:19px;background:#c75050"></div>
<svg class="abs" style="left:1336px;top:5px" width="10" height="9" viewBox="0 0 10 9"><path d="M1 .8L9 8.200M9 .8L1 8.200" stroke="#fff" stroke-width="1.700"/></svg>
</div>
<div id="menu">
<div class="abs" style="left:4px;top:5px;width:2px;height:14px;background:repeating-linear-gradient(#ddd 0 2px,transparent 2px 4px)"></div>
<svg class="abs" style="left:10px;top:4px" width="16" height="16" viewBox="0 0 16 16"><rect x="0" y="0" width="16" height="16" rx="1.5" fill="#1162c4"/><rect x="0" y="0" width="16" height="8" rx="1.5" fill="#2b86e0" opacity=".6"/><circle cx="7" cy="7.5" r="3.4" fill="none" stroke="#fff" stroke-width="1.5"/><path d="M2 2 L12.5 13 M2 13 L12.5 2" stroke="#fff" stroke-width="1.1" fill="none"/><path d="M9 1.8 A7 7 0 0 1 14 7" stroke="#fff" stroke-width="1.2" fill="none"/><text x="8.2" y="15.6" font-family="Liberation Sans,sans-serif" font-weight="bold" font-size="8.5" fill="#ffee00">M</text></svg>
<span style="left:36px">文件(F)</span>
<span style="left:91px">编辑(E)</span>
<span style="left:146px">视图(V)</span>
<span style="left:202px">格式(O)</span>
<span style="left:260px">幅面(P)</span>
<span style="left:316px">绘图(D)</span>
<span style="left:373px">标注(N)</span>
<span style="left:431px">修改(M)</span>
<span style="left:491px">工具(T)</span>
<span style="left:547px">窗口(W)</span>
<span style="left:607px">帮助(H)</span>
<div class="abs" style="left:1322px;top:17px;width:7px;height:2px;background:#aaa"></div>
<svg class="abs" style="left:1336px;top:10px" width="11" height="10" viewBox="0 0 11 10"><path d="M2.5 2.5V.8H10V6.5H8" fill="none" stroke="#aaa" stroke-width="1.4"/><rect x=".7" y="2.8" width="7" height="5.5" fill="none" stroke="#aaa" stroke-width="1.4"/></svg>
<svg class="abs" style="left:1351px;top:10px" width="10" height="10" viewBox="0 0 10 10"><path d="M1 1L9 9M9 1L1 9" stroke="#aaa" stroke-width="2"/></svg>
</div><div class="tb" style="left:0px;top:47px;width:926px;height:26px;border-radius:6px 6px 6px 0;border-bottom:1px solid #d6cfb4"></div>
<div class="tb" style="left:0px;top:73px;width:958px;height:26px;border-radius:0 6px 6px 6px;border-bottom:1px solid #d6cfb4"></div>
<div class="abs" style="left:0;top:70px;width:6px;height:6px;background:#ededed"></div>
<svg class="abs" style="left:0;top:69px" width="4" height="8" viewBox="0 0 4 8"><path d="M0 1.500Q3 4 0 6.500Z" fill="#444"/></svg>
<svg class="abs" style="left:147px;top:72px" width="6" height="28" viewBox="0 0 6 28"><path d="M0 0H6L3 2.500Z M0 27H6L3 24.500Z" fill="#444"/></svg>
<svg class="abs" style="left:297px;top:72px" width="6" height="28" viewBox="0 0 6 28"><path d="M0 0H6L3 2.500Z M0 27H6L3 24.500Z" fill="#444"/></svg>
<svg class="abs" style="left:616px;top:72px" width="6" height="28" viewBox="0 0 6 28"><path d="M0 0H6L3 2.500Z M0 27H6L3 24.500Z" fill="#444"/></svg>
<svg class="abs" style="left:797px;top:72px" width="6" height="28" viewBox="0 0 6 28"><path d="M0 0H6L3 2.500Z M0 27H6L3 24.500Z" fill="#444"/></svg>
<svg class="abs" style="left:374px;top:46px" width="6" height="28" viewBox="0 0 6 28"><path d="M0 1H6L3 3.500Z M0 27H6L3 24.500Z" fill="#444"/></svg>
<svg width="0" height="0" class="abs"><defs>
<linearGradient id="gdoc" x1="0" y1="0" x2="0" y2="1"><stop offset="0" stop-color="#fdfdfe"/><stop offset="1" stop-color="#d4d8e2"/></linearGradient>
<linearGradient id="gfold" x1="0" y1="0" x2="0" y2="1"><stop offset="0" stop-color="#e8eaf0"/><stop offset="1" stop-color="#9aa0b0"/></linearGradient>
<linearGradient id="gclip" x1="0" y1="0" x2="0" y2="1"><stop offset="0" stop-color="#8a8478"/><stop offset="1" stop-color="#d8d2c4"/></linearGradient>
<linearGradient id="ghelp" x1="0" y1="0" x2="1" y2="1"><stop offset="0" stop-color="#3a78c8"/><stop offset="1" stop-color="#0a2a5c"/></linearGradient>
<linearGradient id="gsh" x1="0" y1="0" x2="0" y2="1"><stop offset="0" stop-color="#e8eef6"/><stop offset=".35" stop-color="#fff"/><stop offset="1" stop-color="#3a6296"/></linearGradient>
<linearGradient id="ghand" x1="0" y1="0" x2="0" y2="1"><stop offset="0" stop-color="#fff"/><stop offset="1" stop-color="#a8acb4"/></linearGradient>
<linearGradient id="glens" x1="0" y1="0" x2="1" y2="1"><stop offset="0" stop-color="#fff"/><stop offset="1" stop-color="#c8dce6"/></linearGradient>
<radialGradient id="gshine" cx=".4" cy=".3" r=".8"><stop offset="0" stop-color="#fff" stop-opacity=".55"/><stop offset=".6" stop-color="#fff" stop-opacity="0"/></radialGradient>
<linearGradient id="gdd" x1="0" y1="0" x2="0" y2="1"><stop offset="0" stop-color="#b8bcc6"/><stop offset="1" stop-color="#9da2ae"/></linearGradient>
</defs></svg>
<div class="abs" style="left:4px;top:53px;width:2px;height:14px;background:repeating-linear-gradient(#333 0 2px,transparent 2px 4px)"></div>
<svg class="abs" style="left:13px;top:52px;overflow:visible" width="16" height="16" viewBox="0 0 16 16"><path d="M.6 1.500H11L15.400 5.900V14.500H.6Z" fill="url(#gdoc)" stroke="#2b2b33" stroke-width="1.200"/><path d="M11 1.500V5.900H15.400" fill="#fff" stroke="#2b2b33" stroke-width="1"/></svg>
<svg class="abs" style="left:36px;top:52px;overflow:visible" width="16" height="16" viewBox="0 0 16 16"><path d="M1 13.5V3.5H5.5L7 5H12V7" fill="#eef0f5" stroke="#3a3d48" stroke-width="1.1"/><path d="M1 13.5L4.5 7H15.5L12 13.5Z" fill="url(#gfold)" stroke="#3a3d48" stroke-width="1.1"/></svg>
<svg class="abs" style="left:59px;top:52px;overflow:visible" width="16" height="16" viewBox="0 0 16 16"><rect x="1.2" y="1.2" width="13.6" height="13.6" rx="1.5" fill="#5b6478" stroke="#30343f" stroke-width="1"/><rect x="3.5" y="1.8" width="9" height="5.5" fill="url(#gdoc)"/><rect x="4.5" y="10" width="7" height="4.5" fill="#f4f5f8"/><rect x="6" y="11" width="1.6" height="2.5" fill="#444"/></svg>
<svg class="abs" style="left:90px;top:52px;overflow:visible" width="16" height="16" viewBox="0 0 16 16"><path d="M4 5V1.5H12V5" fill="#fff" stroke="#222" stroke-width="1.2"/><rect x="1" y="5" width="14" height="7" rx="2.5" fill="url(#gdoc)" stroke="#222" stroke-width="1.2"/><rect x="4" y="10" width="8" height="4.5" fill="#fff" stroke="#222" stroke-width="1.1"/><rect x="5" y="11" width="6" height="1.8" fill="#18a7e0"/></svg>
<svg class="abs" style="left:121px;top:52px;overflow:visible" width="16" height="16" viewBox="0 0 16 16"><path d="M2 1L10.5 12M14 1L5.5 12" stroke="#2a2e38" stroke-width="1.7" fill="none"/><rect x="1" y="11" width="4" height="3.2" rx="1" transform="rotate(-38 3 12.6)" fill="#eee" stroke="#2a2e38" stroke-width="1.1"/><rect x="11" y="11" width="4" height="3.2" rx="1" transform="rotate(38 13 12.6)" fill="#eee" stroke="#2a2e38" stroke-width="1.1"/></svg>
<svg class="abs" style="left:144px;top:52px;overflow:visible" width="16" height="16" viewBox="0 0 16 16"><path d="M5 12H1V1H9" fill="none" stroke="#444" stroke-width="1.1"/><path d="M5.5 3.5H11.5L15.5 7.5V15.5H5.5Z" fill="url(#gdoc)" stroke="#333" stroke-width="1.1"/><path d="M11.5 3.5V7.5H15.5" fill="#fff" stroke="#333" stroke-width="1"/></svg>
<svg class="abs" style="left:167px;top:52px;overflow:visible" width="16" height="16" viewBox="0 0 16 16"><rect x="1" y="1" width="7" height="6.5" rx="1" fill="#e9edf2" stroke="#555" stroke-width="1.1"/><rect x="5" y="5" width="8" height="7" rx="1" fill="#a8d8f0" stroke="#0a68c8" stroke-width="1.6"/><path d="M12.5 12.5L16 16" stroke="#0a58b8" stroke-width="1"/><rect x="15.5" y="15" width="2" height="2" fill="#0a48d0"/></svg>
<svg class="abs" style="left:190px;top:52px;overflow:visible" width="16" height="16" viewBox="0 0 16 16"><rect x="4" y="2.5" width="11" height="11.5" rx="1" fill="url(#gclip)" stroke="#3a3a3a" stroke-width="1.1"/><rect x="7" y="1" width="5" height="2.5" rx="1" fill="#eee" stroke="#3a3a3a" stroke-width=".9"/><path d="M1.5 6.5H6L8.5 9V15.5H1.5Z" fill="url(#gdoc)" stroke="#333" stroke-width="1.1"/></svg>
<svg class="abs" style="left:213px;top:52px;overflow:visible" width="16" height="16" viewBox="0 0 16 16"><rect x="4" y="2.5" width="11" height="11.5" rx="1" fill="url(#gclip)" stroke="#3a3a3a" stroke-width="1.1"/><rect x="7" y="1" width="5" height="2.5" rx="1" fill="#eee" stroke="#3a3a3a" stroke-width=".9"/><path d="M1.5 7L7.5 13" stroke="#f0a020" stroke-width="3.2"/><path d="M2 6.5L3.5 5" stroke="#b04010" stroke-width="2.5"/><path d="M7 12.5L9.5 15L9 11.5Z" fill="#f4e0b0" stroke="#555" stroke-width=".6"/></svg>
<svg class="abs" style="left:245px;top:52px;overflow:visible" width="16" height="16" viewBox="0 0 16 16"><path d="M.8 6L7 .8V3.800H10C14.500 3.800 15.500 8.500 13 11L9.800 14.800L7.800 13L10.500 10C12 8.300 11.500 7.500 10 7.500H7V11.200Z" fill="#f6f7fa" stroke="#2d3038" stroke-width="1.200" stroke-linejoin="round"/></svg>
<svg class="abs" style="left:282px;top:52px;overflow:visible" width="16" height="16" viewBox="0 0 16 16"><path d="M15.200 6L9 .8V3.800H6C1.500 3.800 .5 8.500 3 11L6.200 14.800L8.200 13L5.500 10C4 8.300 4.500 7.500 6 7.500H9V11.200Z" fill="#9b9b9b" stroke="#9b9b9b" stroke-width="1" stroke-linejoin="round"/></svg>
<svg class="abs" style="left:325px;top:52px;overflow:visible" width="16" height="16" viewBox="0 0 16 16"><path d="M11 14.500H1.500V4.500L4.500 1.500H13.500V8" fill="url(#gdoc)" stroke="#2b2b33" stroke-width="1.200"/><path d="M12.500 4.500V10" stroke="#b35a12" stroke-width="1.400"/><path d="M11 10H14L15.500 15.500H9.500Z" fill="#f3b21a" stroke="#c47a08" stroke-width=".8"/></svg>
<svg class="abs" style="left:356px;top:52px;overflow:visible" width="16" height="16" viewBox="0 0 16 16"><rect x=".5" y=".5" width="15" height="15" rx="2" fill="url(#ghelp)"/><text x="8" y="13.200" text-anchor="middle" font-family="Liberation Sans,sans-serif" font-weight="bold" font-size="14" fill="#fff">?</text></svg>
<div class="abs" style="left:82px;top:51px;width:1px;height:17px;background:#cfc8ae"></div>
<div class="abs" style="left:113px;top:51px;width:1px;height:17px;background:#cfc8ae"></div>
<div class="abs" style="left:236px;top:51px;width:1px;height:17px;background:#cfc8ae"></div>
<div class="abs" style="left:316px;top:51px;width:1px;height:17px;background:#cfc8ae"></div>
<div class="abs" style="left:347px;top:51px;width:1px;height:17px;background:#cfc8ae"></div>
<svg class="abs" style="left:269px;top:58px" width="6" height="4" viewBox="0 0 6 4"><path d="M0 0H6L3 3.500Z" fill="#444"/></svg>
<svg class="abs" style="left:305px;top:58px" width="6" height="4" viewBox="0 0 6 4"><path d="M0 0H6L3 3.500Z" fill="#999"/></svg>
<div class="abs" style="left:381px;top:53px;width:2px;height:14px;background:repeating-linear-gradient(#333 0 2px,transparent 2px 4px)"></div>
<div class="abs" style="left:389px;top:50px;width:131px;height:19px;background:#fff"></div><div class="abs" style="left:505px;top:51px;width:14px;height:17px;background:linear-gradient(#b4b8c2,#9fa4b0)"></div><svg class="abs" style="left:509px;top:57px" width="6" height="4" viewBox="0 0 6 4"><path d="M0 0H6L3 3.500Z" fill="#444"/></svg>
<svg class="abs" style="left:395px;top:51px;overflow:visible" width="14" height="16" viewBox="0 0 14 16"><path d="M3 5.500C3 -0.500 11 -0.500 11 5.500C11 8 9 8.500 9 10.500H5C5 8.500 3 8 3 5.500Z" fill="#fff" stroke="#e6d800" stroke-width="1.300"/><path d="M5 10.500H9M5 12H9M5.500 13.500H8.500" stroke="#555" stroke-width="1"/></svg>
<svg class="abs" style="left:408px;top:52px;overflow:visible" width="14" height="14" viewBox="0 0 14 14"><path d="M7 0V14M0 7H14M2 2L12 12M12 2L2 12" stroke="#000" stroke-width="1"/><circle cx="7" cy="7" r="3.600" fill="#e8f000" stroke="#b00000" stroke-width="1.300"/><circle cx="7" cy="7" r="2.300" fill="#50e000"/></svg>
<svg class="abs" style="left:423px;top:52px;overflow:visible" width="14" height="15" viewBox="0 0 14 15"><path d="M7.500 7V3.500C7.500 .5 12.500 .5 12.500 3.500V6" fill="none" stroke="#000" stroke-width="1.300"/><path d="M8.500 6V3.800C8.500 2 11.500 2 11.500 3.800" fill="none" stroke="#c8b400" stroke-width="1"/><rect x=".5" y="6.500" width="9" height="7.500" fill="#c8b400" stroke="#000" stroke-width="1"/><path d="M.5 8.800H9.500M.5 11H9.500" stroke="#000" stroke-width="1"/></svg>
<svg class="abs" style="left:436px;top:52px;overflow:visible" width="17" height="16" viewBox="0 0 17 16"><path d="M4 5V1H13V5" fill="#fff" stroke="#000" stroke-width="1.400"/><rect x=".8" y="5" width="15.400" height="7" rx="2.500" fill="#fff" stroke="#000" stroke-width="1.400"/><path d="M1.500 8H15.500" stroke="#888" stroke-width="1.200"/><rect x="4" y="10" width="9" height="4.500" fill="#eee" stroke="#000" stroke-width="1.300"/></svg>
<div class="abs" style="left:454px;top:55px;width:10px;height:9px;background:#f00;border:1px solid #3a8ae0"></div>
<div class="abs" style="left:465px;top:50px;height:19px;line-height:18px;font-size:12.500px;color:#000;white-space:nowrap">中心线</div>
<svg class="abs" style="left:524px;top:52px;overflow:visible" width="17" height="16" viewBox="0 0 17 16"><path d="M5 3L8 1H14L16 3M5 5.500H13L15.500 8M8 8H12L15 10.500M9 10.500H15" fill="none" stroke="#555" stroke-width="1"/><rect x=".8" y="6.500" width="7" height="9" rx="1" fill="#fff" stroke="#3b4660" stroke-width="1.200"/><rect x="2.500" y="8" width="3.500" height="2" fill="#2b6ad0"/><path d="M2.500 12.500H6" stroke="#3b4660" stroke-width="1"/><path d="M16 12V16H12Z" fill="#777"/></svg>
<div class="abs" style="left:551px;top:50px;width:82px;height:19px;background:#fff"></div><div class="abs" style="left:618px;top:51px;width:14px;height:17px;background:linear-gradient(#b4b8c2,#9fa4b0)"></div><svg class="abs" style="left:622px;top:57px" width="6" height="4" viewBox="0 0 6 4"><path d="M0 0H6L3 3.500Z" fill="#444"/></svg>
<div class="abs" style="left:556px;top:55px;width:10px;height:9px;background:#f00;border:1px solid #3a8ae0"></div>
<div class="abs" style="left:572px;top:50px;height:19px;line-height:19px;font-size:11.500px;color:#000">ByLayer</div>
<svg class="abs" style="left:637px;top:52px;overflow:visible" width="16" height="16" viewBox="0 0 16 16"><circle cx="8" cy="8" r="7.200" fill="#888"/><path d="M8 8L8 1A7 7 0 0 1 14.060 4.500Z" fill="#e04a3a"/><path d="M8 8L14.060 4.500A7 7 0 0 1 14.060 11.500Z" fill="#f0a030"/><path d="M8 8L14.060 11.500A7 7 0 0 1 8 15Z" fill="#f0e040"/><path d="M8 8L8 15A7 7 0 0 1 1.940 11.500Z" fill="#60c040"/><path d="M8 8L1.940 11.500A7 7 0 0 1 1.940 4.500Z" fill="#3a70e0"/><path d="M8 8L1.940 4.500A7 7 0 0 1 8 1Z" fill="#9050c8"/><circle cx="8" cy="8" r="7.200" fill="url(#gshine)" stroke="#6a6a6a" stroke-width="1"/></svg>
<div class="abs" style="left:660px;top:50px;width:106px;height:19px;background:#fff"></div><div class="abs" style="left:751px;top:51px;width:14px;height:17px;background:linear-gradient(#b4b8c2,#9fa4b0)"></div><svg class="abs" style="left:755px;top:57px" width="6" height="4" viewBox="0 0 6 4"><path d="M0 0H6L3 3.500Z" fill="#444"/></svg>
<svg class="abs" style="left:667px;top:58px" width="32" height="3"><path d="M0 1.500H32" stroke="#f00" stroke-width="1.200" stroke-dasharray="12 3 2 3"/></svg>
<div class="abs" style="left:705px;top:50px;height:19px;line-height:19px;font-size:11.500px;color:#000">ByLayer</div>
<svg class="abs" style="left:770px;top:52px;overflow:visible" width="18" height="16" viewBox="0 0 18 16"><path d="M0 1.500H18" stroke="#000" stroke-width="1.300" stroke-dasharray="4 1.500"/><path d="M0 5H18" stroke="#000" stroke-width="1.300" stroke-dasharray="2 1.500"/><path d="M0 8.500H18" stroke="#000" stroke-width="1.600"/><path d="M0 12H18" stroke="#000" stroke-width="1.300" stroke-dasharray="3 1.500 1 1.500"/><path d="M0 15H18" stroke="#000" stroke-width="1.300" stroke-dasharray="1.500 1.500"/></svg>
<div class="abs" style="left:793px;top:50px;width:106px;height:19px;background:#fff"></div><div class="abs" style="left:884px;top:51px;width:14px;height:17px;background:linear-gradient(#b4b8c2,#9fa4b0)"></div><svg class="abs" style="left:888px;top:57px" width="6" height="4" viewBox="0 0 6 4"><path d="M0 0H6L3 3.500Z" fill="#444"/></svg>
<div class="abs" style="left:800px;top:59px;width:25px;height:1px;background:#000"></div>
<div class="abs" style="left:835px;top:50px;height:19px;line-height:19px;font-size:11.500px;color:#000">ByLayer</div>
<svg class="abs" style="left:903px;top:52px;overflow:visible" width="18" height="16" viewBox="0 0 18 16"><rect x="0" y="2" width="18" height="1.500" fill="#000"/><rect x="0" y="6" width="18" height="2.500" fill="#000"/><rect x="0" y="11" width="18" height="3.500" fill="#000"/></svg>
<div class="abs" style="left:4px;top:79px;width:2px;height:14px;background:repeating-linear-gradient(#333 0 2px,transparent 2px 4px)"></div>
<svg class="abs" style="left:13px;top:78px;overflow:visible" width="16" height="16" viewBox="0 0 16 16"><rect x="1.500" y="1.500" width="14" height="14" fill="#dcdcdc" stroke="#000" stroke-width="1.400"/><path d="M3.500 5.500V3.500H5.500M11.500 3.500H13.500V5.500M13.500 11.500V13.500H11.500M5.500 13.500H3.500V11.500" fill="none" stroke="#000" stroke-width="1.100"/></svg>
<svg class="abs" style="left:36px;top:78px;overflow:visible" width="16" height="16" viewBox="0 0 16 16"><rect x="1" y="1" width="14" height="14" fill="#fff" stroke="#000" stroke-width="1.300"/><rect x="3.200" y="3.200" width="9.600" height="9.600" fill="#f4f4f4" stroke="#000" stroke-width="1.100"/><rect x="9.500" y="9.500" width="4" height="4" fill="#9bd3f5"/><path d="M8 1V5M8 11V15M1 8H3M13 8H15" stroke="#000" stroke-width="1.600"/><path d="M16 12V16H12Z" fill="#777"/></svg>
<svg class="abs" style="left:59px;top:78px;overflow:visible" width="16" height="16" viewBox="0 0 16 16"><rect x="1" y="4" width="12" height="10" fill="#fafafa" stroke="#999" stroke-width="1"/><path d="M1 9H13" stroke="#999"/><path d="M14.500 0V15.500H1M12.500 1V13" stroke="#888" stroke-width="1" fill="none"/><text x="7.500" y="14" text-anchor="middle" font-family="Liberation Serif,serif" font-weight="bold" font-size="13" fill="#000">T</text><path d="M16 12V16H12Z" fill="#777"/></svg>
<svg class="abs" style="left:82px;top:78px;overflow:visible" width="16" height="16" viewBox="0 0 16 16"><path d="M0 1.500H15.500V14" stroke="#000" stroke-width="1.200" fill="none"/><rect x="3.500" y="3.500" width="10" height="11" fill="#e4f0fc" stroke="#000" stroke-width="1.400"/><path d="M8.500 3.500V14.500M3.500 9H13.500" stroke="#000" stroke-width="1.400"/><path d="M16 12V16H12Z" fill="#777"/></svg>
<svg class="abs" style="left:105px;top:78px;overflow:visible" width="16" height="16" viewBox="0 0 16 16"><text x="2.500" y="7.500" font-family="Liberation Serif,serif" font-weight="bold" font-size="9" fill="#0a2a9a">1</text><text x="9.500" y="7.500" font-family="Liberation Serif,serif" font-weight="bold" font-size="9" fill="#0a2a9a">2</text><path d="M1.500 15L5 9.500H9M8.500 15L12 9.500H16" stroke="#000" stroke-width="1.500" fill="none"/><circle cx="1.500" cy="15" r="1.100"/><circle cx="8.500" cy="15" r="1.100"/><path d="M16 12V16H12Z" fill="#777"/></svg>
<svg class="abs" style="left:128px;top:78px;overflow:visible" width="16" height="16" viewBox="0 0 16 16"><rect x=".5" y="1.500" width="14" height="13" fill="#fafafa" stroke="#9a9a9a" stroke-width="1"/><path d="M.5 5H14.500M.5 8.500H14.500M.5 12H14.500M4 1.500V14.500M11 1.500V14.500" stroke="#aaa" stroke-width=".9"/><text x="7.500" y="13.500" text-anchor="middle" font-family="Liberation Serif,serif" font-weight="bold" font-size="14" fill="#000">T</text><path d="M16 12V16H12Z" fill="#777"/></svg>
<div class="abs" style="left:155px;top:79px;width:2px;height:14px;background:repeating-linear-gradient(#333 0 2px,transparent 2px 4px)"></div>
<svg class="abs" style="left:163px;top:78px;overflow:visible" width="16" height="16" viewBox="0 0 16 16"><path d="M1.500 10C0 8 1.500 5 3.500 5S5.500 8 6 9.500S8 11.500 9 9.500S9.500 5 11.500 5S15 7.500 13.500 10" fill="none" stroke="#000" stroke-width="1.300"/></svg>
<svg class="abs" style="left:186px;top:78px;overflow:visible" width="16" height="16" viewBox="0 0 16 16"><path d="M0 8.500H5L7 12L9.500 5L11.500 8.500H15.500" fill="none" stroke="#000" stroke-width="1.200"/></svg>
<svg class="abs" style="left:209px;top:78px;overflow:visible" width="16" height="16" viewBox="0 0 16 16"><path d="M1.500 14L12 3.500" stroke="#000" stroke-width="1.300"/><path d="M13.500 2L11.800 8L7.500 3.800Z" fill="#000"/></svg>
<svg class="abs" style="left:232px;top:78px;overflow:visible" width="16" height="16" viewBox="0 0 16 16"><path d="M4 6.500C1 6.500 1 2.500 3.500 2.500C4 0 8 0 8.500 2.500C11.500 1.500 13 4.500 11.500 6.500C15 6.500 15.500 10.500 13 11.500C13 14.500 9.500 14.500 9 13" fill="none" stroke="#000" stroke-width="1.300"/><ellipse cx="4.500" cy="11.500" rx="3.500" ry="2.300" fill="#fff" stroke="#000" stroke-width="1.300"/><path d="M8 6L12 12" stroke="#9bd3f5" stroke-width="3" opacity=".6"/></svg>
<svg class="abs" style="left:255px;top:78px;overflow:visible" width="16" height="16" viewBox="0 0 16 16"><circle cx="8" cy="5.500" r="4.500" fill="#bfe3fa" stroke="#666" stroke-width="1.100"/><path d="M1.500 15.500V10.500C4 13 12 13 14.500 10.500V15.500" fill="none" stroke="#000" stroke-width="1.300"/></svg>
<svg class="abs" style="left:278px;top:78px;overflow:visible" width="16" height="16" viewBox="0 0 16 16"><rect x="0" y="5" width="8" height="6" fill="url(#gsh)"/><rect x="8" y="2.500" width="3" height="11" fill="url(#gsh)"/><rect x="11" y="0.500" width="4.500" height="15" fill="url(#gsh)"/></svg>
<div class="abs" style="left:305px;top:79px;width:2px;height:14px;background:repeating-linear-gradient(#333 0 2px,transparent 2px 4px)"></div>
<svg class="abs" style="left:313px;top:78px;overflow:visible" width="16" height="16" viewBox="0 0 16 16"><g shape-rendering="crispEdges"><path d="M1.500 0V16M15.500 0V16" stroke="#555" stroke-width="1"/><path d="M1 5.500H16" stroke="#555" stroke-width="1"/></g><path d="M1.500 5.500L4 4V7ZM15.500 5.500L13 4V7Z" fill="#444"/></svg>
<svg class="abs" style="left:336px;top:78px;overflow:visible" width="16" height="16" viewBox="0 0 16 16"><path d="M5 4V15.500M3 14H15.500M5 5L11 11V15M10 9.500H15M13.500 5V9" stroke="#333" stroke-width="1.200" fill="none"/><text x="4" y="4" font-size="5.500" font-family="Liberation Sans,sans-serif" font-weight="bold" fill="#0a58d0">o</text><text x="12" y="4.500" font-size="5.500" font-family="Liberation Sans,sans-serif" font-weight="bold" fill="#0a58d0">x</text><text x="0" y="9.500" font-size="5.500" font-family="Liberation Sans,sans-serif" font-weight="bold" fill="#0a58d0">Y</text><text x="0" y="16" font-size="5.500" font-family="Liberation Sans,sans-serif" font-weight="bold" fill="#0a58d0">o</text></svg>
<svg class="abs" style="left:367px;top:78px;overflow:visible" width="16" height="16" viewBox="0 0 16 16"><path d="M13 2.500L4.500 11" stroke="#f00" stroke-width="1.600"/><path d="M4.500 11V15M13 2.500H16" stroke="#000" stroke-width="1.300"/><path d="M1.500 1.500C4 1.500 6 3.500 7 6" fill="none" stroke="#000" stroke-width="1.200"/><path d="M8 7.500L4.500 6L7.500 3.500Z" fill="#000"/></svg>
<svg class="abs" style="left:390px;top:78px;overflow:visible" width="16" height="16" viewBox="0 0 16 16"><path d="M2.500 12L4.500 5.500H9" fill="none" stroke="#12306e" stroke-width="1.300"/><path d="M1.500 15.500L1.800 10.500L4.500 11.500Z" fill="#12306e"/><text x="9.500" y="8" font-size="8.500" font-weight="bold" font-family="Liberation Sans,sans-serif" fill="#12306e">A</text></svg>
<svg class="abs" style="left:413px;top:78px;overflow:visible" width="16" height="16" viewBox="0 0 16 16"><path d="M1.500 8L4.500 13.500L10 2H14" fill="none" stroke="#12306e" stroke-width="1.400"/></svg>
<svg class="abs" style="left:436px;top:78px;overflow:visible" width="16" height="16" viewBox="0 0 16 16"><rect x="3.500" y=".5" width="10" height="9" fill="#d6e8fa" stroke="#3a6ea8" stroke-width="1"/><text x="8.500" y="8" text-anchor="middle" font-size="8" font-weight="bold" font-family="Liberation Sans,sans-serif" fill="#12306e">A</text><path d="M8.500 9.500V12" stroke="#12306e" stroke-width="1.200"/><path d="M5 15.500H12L8.500 11.500Z" fill="#12306e"/></svg>
<svg class="abs" style="left:459px;top:78px;overflow:visible" width="16" height="16" viewBox="0 0 16 16"><rect x=".5" y="3.500" width="15" height="9" fill="#cfe2f5" stroke="#3a6ea8" stroke-width="1"/><rect x="8.500" y="4" width="6.500" height="8" fill="#a8c4e4"/><circle cx="4.500" cy="8" r="2.200" fill="none" stroke="#1d4a8a" stroke-width="1"/><path d="M1.500 8H7.500" stroke="#1d4a8a" stroke-width="1"/><text x="9" y="11.500" font-size="7" font-weight="bold" font-family="Liberation Sans,sans-serif" fill="#12306e">.1</text></svg>
<svg class="abs" style="left:482px;top:78px;overflow:visible" width="16" height="16" viewBox="0 0 16 16"><path d="M2.500 12L9 7H12.500L16 4M12.500 7L16 10" fill="none" stroke="#1d4a8a" stroke-width="1.200"/><path d="M.5 14L2 10.500L4.500 13Z" fill="#1d4a8a"/></svg>
<svg class="abs" style="left:505px;top:78px;overflow:visible" width="16" height="16" viewBox="0 0 16 16"><path d="M1.500 6.500V3.500H5.500M1.500 9.500V12.500H5.500" fill="none" stroke="#000" stroke-width="1.300"/><path d="M7.500 3.500L4.800 1.800V5.200ZM7.500 12.500L4.800 10.800V14.200Z" fill="#000"/><text x="8.5" y="7" font-size="8.5" font-family="Liberation Sans,sans-serif" fill="#000">A</text><text x="8.5" y="16" font-size="8.5" font-family="Liberation Sans,sans-serif" fill="#000">A</text></svg>
<svg class="abs" style="left:528px;top:78px;overflow:visible" width="16" height="16" viewBox="0 0 16 16"><circle cx="9" cy="8.500" r="6.500" fill="none" stroke="#555" stroke-width="1.200"/><rect x="9" y="8.500" width="6.800" height="7" fill="#bfe0f7" stroke="#555" stroke-width="1"/><rect x="0" y="0" width="6.500" height="7" fill="#ededed"/><text x="1" y="6" font-size="7" font-family="Liberation Sans,sans-serif" fill="#333">A</text><path d="M7.500 1.500L10.500 .2V3Z M2.500 11.500L1.200 8.500H4Z" fill="#333"/></svg>
<svg class="abs" style="left:551px;top:78px;overflow:visible" width="16" height="16" viewBox="0 0 16 16"><rect x="2" y="2.500" width="4.500" height="10" fill="#fff" stroke="#000" stroke-width="1.300"/><path d="M.5 7.500H9.500M11 4L7.500 7.500L11 11" stroke="#1b8fe0" stroke-width="1.200" fill="none"/><text x="10.5" y="11" font-size="8" font-family="Liberation Sans,sans-serif" fill="#444">A</text></svg>
<svg class="abs" style="left:574px;top:78px;overflow:visible" width="16" height="16" viewBox="0 0 16 16"><text x="5" y="8" font-size="8.5" font-family="Liberation Sans,sans-serif" fill="#555">A</text><path d="M3 12H11" stroke="#555" stroke-width="1.200"/><path d="M13 12L9.500 9.800V14.200Z" fill="#555"/></svg>
<svg class="abs" style="left:597px;top:78px;overflow:visible" width="16" height="16" viewBox="0 0 16 16"><path d="M1.500 9V6.500C1.500 4 3 3.500 6 3.500" fill="none" stroke="#222" stroke-width="1.300"/><path d="M8.500 3.500L5.500 1.200V5.800Z" fill="#222"/><text x="9" y="8.5" font-size="9.5" font-family="Liberation Sans,sans-serif" fill="#000">A</text><rect x="1" y="11" width="14" height="4.500" rx="1.200" fill="#eee" stroke="#333" stroke-width="1.300"/><path d="M3 13.200H8M10 13.200H12" stroke="#333" stroke-width="1"/></svg>
<div class="abs" style="left:359px;top:77px;width:1px;height:17px;background:#cfc8ae"></div>
<div class="abs" style="left:624px;top:79px;width:2px;height:14px;background:repeating-linear-gradient(#333 0 2px,transparent 2px 4px)"></div>
<svg class="abs" style="left:632px;top:78px;overflow:visible" width="16" height="16" viewBox="0 0 16 16"><rect x="1.500" y=".5" width="13" height="15" rx="1" fill="#fafbfd" stroke="#3b4660" stroke-width="1.200"/><rect x="7" y="2.500" width="5.500" height="6" fill="#3a6fb5"/><rect x="4" y="2.500" width="1.800" height="6" fill="#aab4c8"/><path d="M4.500 12H11" stroke="#3b4660" stroke-width="1.100"/><path d="M12 12L9.800 10.500V13.500Z" fill="#3b4660"/></svg>
<svg class="abs" style="left:655px;top:78px;overflow:visible" width="16" height="16" viewBox="0 0 16 16"><path d="M1 1.500V6.500M15 1.500V6.500M1 4H15" stroke="#444" stroke-width="1.100"/><rect x=".8" y="8.500" width="14.400" height="4" rx="1.500" fill="#f7c61b" stroke="#c98a08" stroke-width="1"/><path d="M3 9V10.500M5 9V10.500M7 9V10.500M9 9V10.500M11 9V10.500M13 9V10.500" stroke="#8a5a00" stroke-width=".7"/><path d="M16 12V16H12Z" fill="#777"/></svg>
<svg class="abs" style="left:686px;top:78px;overflow:visible" width="16" height="16" viewBox="0 0 16 16"><path d="M3.500 .5V7.500M0 4H7" stroke="#000" stroke-width="1.200"/><path d="M3.500 0L2 2H5ZM3.500 8L2 6H5ZM0 4L2 2.500V5.500ZM7 4L5 2.500V5.500Z" fill="#000"/><path d="M4 9C3 6 6 4 9 4.500C11 3 15 3.500 15.500 6L12 8.500L15.500 10C15 13.500 10 15.500 6.500 14.500C4.500 13.500 3.500 11 4 9Z" fill="url(#ghand)" stroke="#444" stroke-width="1"/></svg>
<svg class="abs" style="left:709px;top:78px;overflow:visible" width="16" height="16" viewBox="0 0 16 16"><circle cx="10" cy="6" r="5.300" fill="url(#glens)" stroke="#555" stroke-width="1.300"/><path d="M6 10L1.200 14.800" stroke="#333" stroke-width="2.600" stroke-linecap="round"/></svg>
<svg class="abs" style="left:732px;top:78px;overflow:visible" width="16" height="16" viewBox="0 0 16 16"><circle cx="10" cy="6" r="5.300" fill="url(#glens)" stroke="#555" stroke-width="1.300"/><path d="M6 10L1.200 14.800" stroke="#333" stroke-width="2.600" stroke-linecap="round"/><rect x="7.500" y="3.500" width="5" height="5" rx=".8" fill="#f6f6fa" stroke="#555" stroke-width="1"/></svg>
<svg class="abs" style="left:755px;top:78px;overflow:visible" width="16" height="16" viewBox="0 0 16 16"><circle cx="10" cy="6" r="5.300" fill="url(#glens)" stroke="#555" stroke-width="1.300"/><path d="M6 10L1.200 14.800" stroke="#333" stroke-width="2.600" stroke-linecap="round"/><path d="M8 4H11L12.500 5.500V9H8Z M7 8H6.500V3H9" fill="#f6f6fa" stroke="#555" stroke-width=".9"/></svg>
<svg class="abs" style="left:778px;top:78px;overflow:visible" width="16" height="16" viewBox="0 0 16 16"><circle cx="8" cy="6.500" r="5.300" fill="url(#glens)" stroke="#555" stroke-width="1.300"/><path d="M4 10.500L.8 15" stroke="#333" stroke-width="2.600" stroke-linecap="round"/><path d="M11 4C14.500 4 16 7 14.500 9.500" fill="none" stroke="#000" stroke-width="1.300"/><path d="M8.500 4L12 1.500V6.500Z" fill="#000"/></svg>
<div class="abs" style="left:678px;top:77px;width:1px;height:17px;background:#cfc8ae"></div>
<div class="abs" style="left:805px;top:79px;width:2px;height:14px;background:repeating-linear-gradient(#333 0 2px,transparent 2px 4px)"></div>
<svg class="abs" style="left:813px;top:78px;overflow:visible" width="16" height="16" viewBox="0 0 16 16"><path d="M4.500 15V7C4.500 0 14.500 0 14.500 7V15H11V7C11 4.500 8 4.500 8 7V15Z" fill="#b23a44" stroke="#7a2028" stroke-width="1"/><rect x="4.500" y="12" width="3.500" height="3" fill="#fff" stroke="#7a2028" stroke-width=".8"/><rect x="11" y="12" width="3.500" height="3" fill="#fff" stroke="#7a2028" stroke-width=".8"/><rect x=".5" y="12" width="2.500" height="2.500" fill="#fff" stroke="#333" stroke-width="1"/></svg>
<svg class="abs" style="left:836px;top:78px;overflow:visible" width="16" height="16" viewBox="0 0 16 16"><path d="M0 1H12L7.500 7.500V13.500H5V7.500Z" fill="#2fa9e8"/><circle cx="12.500" cy="9.500" r="1.800" fill="#fff" stroke="#000" stroke-width="1"/><path d="M12.500 5.500V13.500M8.500 9.500H16.500" stroke="#000" stroke-width="1"/><path d="M0 15.500H16" stroke="#efe2c0" stroke-width="1.200"/></svg>
<svg class="abs" style="left:867px;top:78px;overflow:visible" width="16" height="16" viewBox="0 0 16 16"><path d="M1 2V8M15 2V8M1 5H15" stroke="#333" stroke-width="1.200"/><path d="M15.5 6L10 11" stroke="#e8901a" stroke-width="2.200"/><path d="M15.5 6L10 11" stroke="#7a2f08" stroke-width=".7"/><path d="M8.5 10Q4.75 15.75 2.5 15.5L12.5 15.5Q13 13 11.5 12Z" fill="#9a5a22" stroke="#6e3c10" stroke-width=".5"/></svg>
<svg class="abs" style="left:890px;top:78px;overflow:visible" width="16" height="16" viewBox="0 0 16 16"><text x="-.5" y="12" font-size="15" font-family="Liberation Sans,sans-serif" fill="#333">A</text><path d="M15.5 6.5L10.5 11.5" stroke="#e8901a" stroke-width="2.200"/><path d="M15.5 6.5L10.5 11.5" stroke="#7a2f08" stroke-width=".7"/><path d="M9.0 10.5Q5.25 16.0 3 15.5L13.0 15.5Q13.5 13.5 12.0 12.5Z" fill="#9a5a22" stroke="#6e3c10" stroke-width=".5"/></svg>
<svg class="abs" style="left:913px;top:78px;overflow:visible" width="16" height="16" viewBox="0 0 16 16"><path d="M3 2.500H12.500V14" stroke="#222" stroke-width="1.100" fill="none"/><rect x="1" y="1" width="2.800" height="2.800" fill="#fff" stroke="#222" stroke-width=".9"/><rect x="11" y=".8" width="3.400" height="3.400" fill="#1b7fe6"/><path d="M0 5L6 11" stroke="#e8901a" stroke-width="2.200"/><path d="M0 5L6 11" stroke="#7a2f08" stroke-width=".7"/><path d="M5 9.500Q7 14 13.500 15.500L7.500 15.500Q5 13 4 10.500Z" fill="#9a5a22" stroke="#6e3c10" stroke-width=".5"/></svg>
<svg class="abs" style="left:936px;top:78px;overflow:visible" width="16" height="16" viewBox="0 0 16 16"><rect x=".8" y="3.500" width="14.400" height="12" fill="#f4f8fc" stroke="#5578a8" stroke-width="1.100"/><path d="M3 7.500H5.500M3 10H5.500M3 12.500H5.500M7 10H13.500M7 12.500H13.500M7 7.500H9" stroke="#5578a8" stroke-width="1"/><path d="M16 .5L10 6.500" stroke="#c0501a" stroke-width="1.600"/><path d="M11 5L6.500 8.500L11.500 8Z" fill="#8a3a1a"/></svg>
<div class="abs" style="left:859px;top:77px;width:1px;height:17px;background:#cfc8ae"></div><div class="tb" style="left:1px;top:124px;width:25px;height:395px;border-radius:6px;border-right:1px solid #d6cfb4"></div>
<div class="tb" style="left:27px;top:124px;width:26px;height:395px;border-radius:6px;border-right:1px solid #d6cfb4"></div>
<div class="abs" style="left:6px;top:129px;width:14px;height:2px;background:repeating-linear-gradient(90deg,#333 0 2px,transparent 2px 4px)"></div>
<div class="abs" style="left:33px;top:129px;width:14px;height:2px;background:repeating-linear-gradient(90deg,#333 0 2px,transparent 2px 4px)"></div>
<svg class="abs" style="left:5px;top:138px;overflow:visible" width="16" height="16" viewBox="0 0 16 16"><path d="M2.500 13.500L13.500 2.500" stroke="#333" stroke-width="1.200"/><rect x="1" y="12" width="3" height="3" fill="#fff" stroke="#333" stroke-width=".9"/><rect x="12" y="1" width="3" height="3" fill="#fff" stroke="#333" stroke-width=".9"/><path d="M16 12V16H12Z" fill="#777"/></svg>
<svg class="abs" style="left:5px;top:160px;overflow:visible" width="16" height="16" viewBox="0 0 16 16"><path d="M1 12L12 1M4 15L15 4" stroke="#333" stroke-width="1.200"/></svg>
<svg class="abs" style="left:5px;top:182px;overflow:visible" width="16" height="16" viewBox="0 0 16 16"><circle cx="7.500" cy="8" r="6.500" fill="none" stroke="#333" stroke-width="1.200"/><rect x="6" y="6.500" width="3" height="3" fill="#fff" stroke="#333" stroke-width=".9"/><path d="M16 12V16H12Z" fill="#777"/></svg>
<svg class="abs" style="left:5px;top:204px;overflow:visible" width="16" height="16" viewBox="0 0 16 16"><path d="M2.500 13.500C2.500 7 7 2.500 13.500 2.500" fill="none" stroke="#333" stroke-width="1.200"/><rect x="1" y="12" width="3" height="3" fill="#fff" stroke="#333" stroke-width=".9"/><rect x="12" y="1" width="3" height="3" fill="#fff" stroke="#333" stroke-width=".9"/><path d="M16 12V16H12Z" fill="#777"/></svg>
<svg class="abs" style="left:5px;top:226px;overflow:visible" width="16" height="16" viewBox="0 0 16 16"><path d="M2 14C2 6 6 8 8 10S14 10 14 2" fill="none" stroke="#222" stroke-width="1.300"/><rect x=".8" y="12.800" width="2.600" height="2.600" fill="#fff" stroke="#222" stroke-width=".9"/><rect x="12.600" y=".8" width="2.600" height="2.600" fill="#fff" stroke="#222" stroke-width=".9"/></svg>
<svg class="abs" style="left:5px;top:248px;overflow:visible" width="16" height="16" viewBox="0 0 16 16"><rect x="6.500" y="6.500" width="3" height="3" fill="#fff" stroke="#333" stroke-width=".9"/></svg>
<svg class="abs" style="left:5px;top:270px;overflow:visible" width="16" height="16" viewBox="0 0 16 16"><ellipse cx="8" cy="8" rx="6.800" ry="4.200" fill="none" stroke="#333" stroke-width="1.200"/><rect x="0" y="6.800" width="2.400" height="2.400" fill="#fff" stroke="#333" stroke-width=".8"/><rect x="13.600" y="6.800" width="2.400" height="2.400" fill="#fff" stroke="#333" stroke-width=".8"/></svg>
<svg class="abs" style="left:5px;top:292px;overflow:visible" width="16" height="16" viewBox="0 0 16 16"><path d="M2.500 4.500L14 3V12.500H1.500Z" fill="none" stroke="#333" stroke-width="1.200"/><rect x="1" y="3" width="2.600" height="2.600" fill="#fff" stroke="#333" stroke-width=".8"/><rect x="12.600" y="1.600" width="2.600" height="2.600" fill="#fff" stroke="#333" stroke-width=".8"/></svg>
<svg class="abs" style="left:5px;top:314px;overflow:visible" width="16" height="16" viewBox="0 0 16 16"><path d="M8 1.500L15 6.500L12.500 14.500H3.500L1 6.500Z" fill="#fafafa" stroke="#333" stroke-width="1.200"/><rect x="7" y="7.500" width="2" height="2" fill="#333"/></svg>
<svg class="abs" style="left:5px;top:336px;overflow:visible" width="16" height="16" viewBox="0 0 16 16"><path d="M3 12.500H9C15 12.500 15 3 9 3" fill="none" stroke="#333" stroke-width="1.200"/><rect x="1" y="11" width="3" height="3" fill="#fff" stroke="#333" stroke-width=".9"/><rect x="7" y="11" width="3" height="3" fill="#fff" stroke="#333" stroke-width=".9"/></svg>
<svg class="abs" style="left:5px;top:358px;overflow:visible" width="16" height="16" viewBox="0 0 16 16"><path d="M1 15L15 1" stroke="#1b5fb8" stroke-width="1.400" stroke-dasharray="5 1.500 1.500 1.500"/><path d="M16 12V16H12Z" fill="#777"/></svg>
<svg class="abs" style="left:5px;top:380px;overflow:visible" width="16" height="16" viewBox="0 0 16 16"><path d="M2 13.500H13C15.500 13.500 15.500 9.500 12.500 9.500C9.500 9.500 11.500 6.500 11.500 4.500C11.500 .5 4.500 .5 4.500 4.500C4.500 6.500 6 8 4 9.500H1.500" fill="none" stroke="#333" stroke-width="1.200"/><path d="M2 11.500H12" stroke="#1b7fe0" stroke-width="1.600"/><path d="M1 15.500H14" stroke="#333" stroke-width="1.200"/></svg>
<svg class="abs" style="left:5px;top:402px;overflow:visible" width="16" height="16" viewBox="0 0 16 16"><path d="M2.500 .5V13.500H15.500" fill="none" stroke="#000" stroke-width="1.200"/><path d="M2.500 0L1 2.500H4ZM16 13.500L13.500 12V15Z" fill="#000"/><path d="M2.500 11C4 6 7 5 9 7.500L13 13" fill="none" stroke="#444" stroke-width="1"/></svg>
<svg class="abs" style="left:5px;top:424px;overflow:visible" width="16" height="16" viewBox="0 0 16 16"><rect x="3" y="3" width="10" height="10" fill="#ccc" stroke="#333" stroke-width="1"/><path d="M3 0V16M13 0V16M0 3H16M0 13H16" stroke="#444" stroke-width="1"/><path d="M3 8L8 3M3 13L13 3M8 13L13 8" stroke="#555" stroke-width=".8"/></svg>
<svg class="abs" style="left:5px;top:446px;overflow:visible" width="16" height="16" viewBox="0 0 16 16"><path d="M1 2.500H10L15 7V13.500H1Z" fill="#fafafa" stroke="#333" stroke-width="1.200"/><circle cx="6.500" cy="8.500" r="3" fill="#fff" stroke="#333" stroke-width="1.200"/></svg>
<svg class="abs" style="left:5px;top:468px;overflow:visible" width="16" height="16" viewBox="0 0 16 16"><text x="8" y="14.500" text-anchor="middle" font-family="Liberation Serif,serif" font-weight="bold" font-size="18" fill="#000">A</text></svg>
<div class="abs" style="left:5px;top:490px;width:17px;height:1px;background:#cfc8ae"></div>
<svg class="abs" style="left:5px;top:498px;overflow:visible" width="16" height="16" viewBox="0 0 16 16"><rect x="3" y="3.500" width="11" height="8" rx="1.500" fill="#fafafa" stroke="#333" stroke-width="1.200"/><circle cx="4" cy="11.500" r="2.800" fill="#fff" stroke="#333" stroke-width="1.100"/><path d="M4 11.500V9.500M4 11.500H6" stroke="#333" stroke-width=".8"/><path d="M16 12V16H12Z" fill="#777"/></svg>
<svg class="abs" style="left:32px;top:138px;overflow:visible" width="16" height="16" viewBox="0 0 16 16"><path d="M3 1L12 10" stroke="#e8901a" stroke-width="3.400"/><path d="M2 2L4 0" stroke="#7a2f08" stroke-width="1"/><path d="M10.500 8.500L13.500 11.500" stroke="#c03a10" stroke-width="3.600"/><path d="M1 15.500H9" stroke="#333" stroke-width="1.100"/><path d="M16 12V16H12Z" fill="#777"/></svg>
<svg class="abs" style="left:32px;top:160px;overflow:visible" width="16" height="16" viewBox="0 0 16 16"><path d="M8 1V15M1 8H15" stroke="#222" stroke-width="1.300" stroke-dasharray="3.500 1.200"/><path d="M8 0L5.800 3H10.200ZM8 16L5.800 13H10.200ZM0 8L3 5.800V10.200ZM16 8L13 5.800V10.200Z" fill="#222"/><circle cx="8" cy="8" r="1.800" fill="#fff" stroke="#222" stroke-width="1"/></svg>
<svg class="abs" style="left:32px;top:182px;overflow:visible" width="16" height="16" viewBox="0 0 16 16"><circle cx="10.500" cy="5" r="3.800" fill="#cfe6fa" stroke="#1b6fd0" stroke-width="1.300"/><circle cx="7" cy="3" r="2.500" fill="none" stroke="#1b6fd0" stroke-width="1"/><circle cx="4" cy="11.500" r="3" fill="#fff" stroke="#333" stroke-width="1.100"/><path d="M9 14.500H13V11" fill="none" stroke="#000" stroke-width="1.200"/><path d="M13 9.500L11.200 12H14.800Z" fill="#000"/></svg>
<svg class="abs" style="left:32px;top:204px;overflow:visible" width="16" height="16" viewBox="0 0 16 16"><path d="M8 2.500A6 6 0 1 1 3 5" fill="none" stroke="#333" stroke-width="1.200"/><path d="M6 2.500L9.500 .3V4.700Z" fill="#000"/><circle cx="8" cy="8.500" r="1.300" fill="#000"/></svg>
<svg class="abs" style="left:32px;top:226px;overflow:visible" width="16" height="16" viewBox="0 0 16 16"><path d="M8 0V16" stroke="#333" stroke-width="1"/><path d="M6.500 3V14H1.500Z" fill="#fff" stroke="#333" stroke-width="1.100"/><path d="M9.500 3V14H14.500Z" fill="#9bd0f5" stroke="#1b6fd0" stroke-width="1.100"/></svg>
<svg class="abs" style="left:32px;top:248px;overflow:visible" width="16" height="16" viewBox="0 0 16 16"><rect x="1" y="1" width="5.500" height="5.500" fill="#fff" stroke="#1b6fd0" stroke-width="1.300"/><rect x="9.500" y="1" width="5.500" height="5.500" fill="#fff" stroke="#1b6fd0" stroke-width="1.300"/><rect x="1" y="9.500" width="5.500" height="5.500" fill="#fff" stroke="#333" stroke-width="1.300"/><rect x="9.500" y="9.500" width="5.500" height="5.500" fill="#fff" stroke="#1b6fd0" stroke-width="1.300"/></svg>
<svg class="abs" style="left:32px;top:270px;overflow:visible" width="16" height="16" viewBox="0 0 16 16"><path d="M1 1H15V15H1Z" fill="#bfe0f5" stroke="#1b6fd0" stroke-width="1.300"/><rect x="1" y="1" width="8" height="8" fill="#f4f4f4" stroke="#333" stroke-width="1.200"/></svg>
<svg class="abs" style="left:32px;top:292px;overflow:visible" width="16" height="16" viewBox="0 0 16 16"><rect x="1.500" y="2" width="13" height="12.500" fill="url(#gdoc)" stroke="#333" stroke-width="1.200"/><path d="M1.500 14.500V2H14.500" fill="none" stroke="#1b6fd0" stroke-width="1.500" stroke-dasharray="3 1.500"/></svg>
<svg class="abs" style="left:32px;top:314px;overflow:visible" width="16" height="16" viewBox="0 0 16 16"><path d="M1 7H6M9.500 9H15.500" stroke="#1b6fd0" stroke-width="1.100" stroke-dasharray="3 1.500"/><path d="M4 1L10 15" stroke="#1b6fd0" stroke-width="1.200"/></svg>
<svg class="abs" style="left:32px;top:336px;overflow:visible" width="16" height="16" viewBox="0 0 16 16"><path d="M1 9H8" stroke="#0a2a8a" stroke-width="1.200" stroke-dasharray="2.500 1.500"/><path d="M9 1L15 15" stroke="#1b6fd0" stroke-width="1.200"/></svg>
<svg class="abs" style="left:32px;top:358px;overflow:visible" width="16" height="16" viewBox="0 0 16 16"><path d="M1.500 1H9.500V15H1.500Z" fill="#fff" stroke="#333" stroke-width="1.200"/><path d="M9.500 1L13 1L15.500 15H9.500Z" fill="#9bd0f5" stroke="#1b6fd0" stroke-width="1"/><path d="M4 11.500H10" stroke="#000" stroke-width="1.200"/><path d="M12 11.500L9.500 9.800V13.200Z" fill="#000"/></svg>
<svg class="abs" style="left:32px;top:380px;overflow:visible" width="16" height="16" viewBox="0 0 16 16"><rect x="1.500" y="2.500" width="13" height="12" rx="1" fill="#fafbfd" stroke="#333" stroke-width="1.200"/><rect x="3" y="1" width="3" height="3" fill="#1b6fd0"/><rect x="10" y="1" width="3" height="3" fill="#1b6fd0"/></svg>
<svg class="abs" style="left:32px;top:402px;overflow:visible" width="16" height="16" viewBox="0 0 16 16"><path d="M4 5H12V12H4Z M1 8L4 5M9 8L12 5M9 15L12 12M1 8H9V15H1Z M12 7L15.500 7V13H12" fill="none" stroke="#1b6fd0" stroke-width="1.300"/></svg>
<div class="abs" style="left:32px;top:424px;width:17px;height:1px;background:#cfc8ae"></div>
<svg class="abs" style="left:32px;top:432px;overflow:visible" width="16" height="16" viewBox="0 0 16 16"><path d="M1 8V16M15 8V16M1 12.500H15" stroke="#333" stroke-width="1.100"/><path d="M3 1L10 8" stroke="#e8a01a" stroke-width="3"/><path d="M9 7L11.500 9.500L8 8.500Z" fill="#333"/></svg>
<svg class="abs" style="left:32px;top:454px;overflow:visible" width="16" height="16" viewBox="0 0 16 16"><path d="M6 2V8M14.500 2V8M6 5H14.500" stroke="#000" stroke-width="1.400"/><path d="M6 5L8.500 3V7ZM14.500 5L12 3V7Z" fill="#000"/><path d="M0 10V15M7 10V15M0 12.500H7" stroke="#1b6fd0" stroke-width="1"/><path d="M9 13.500C12 13.500 13.500 12 13.500 9.500" fill="none" stroke="#000" stroke-width="1.100"/><path d="M8 13.500L10.500 12V15Z" fill="#000"/></svg>
<svg class="abs" style="left:32px;top:476px;overflow:visible" width="16" height="16" viewBox="0 0 16 16"><rect x="4.500" y=".5" width="11" height="14" rx="1" fill="#fafbfd" stroke="#3b4660" stroke-width="1.100"/><rect x="9" y="2.500" width="5" height="5" fill="#3a6fb5"/><rect x="6.500" y="2.500" width="1.500" height="5" fill="#aab4c8"/><path d="M9 8L4 12" stroke="#e8901a" stroke-width="2.200"/><path d="M5 10.500Q2 12 0 15.500Q5 16 7.500 13Z" fill="#9a5a22"/></svg>
<svg class="abs" style="left:32px;top:498px;overflow:visible" width="16" height="16" viewBox="0 0 16 16"><path d="M1.500 9V6.500C1.500 4 3 3.500 6 3.500" fill="none" stroke="#222" stroke-width="1.300"/><path d="M8.500 3.500L5.500 1.200V5.800Z" fill="#222"/><path d="M9.500 1.500H15.500M12.500 1.500V9" stroke="#444" stroke-width="2"/><rect x="1" y="11" width="14" height="4.500" rx="1.200" fill="#eee" stroke="#333" stroke-width="1.300"/><path d="M3 13.200H8M10 13.200H12" stroke="#333" stroke-width="1"/><path d="M16 12V16H12Z" fill="#777"/></svg>
<div style="position:absolute;left:55px;width:18px;background:linear-gradient(90deg,#fdf0bd,#f9d672);border:1px solid #f6e7a8;border-left:none;top:103px;height:71px"></div>
<div style="position:absolute;left:55px;width:18px;background:linear-gradient(90deg,#fdf0bd,#f9d672);border:1px solid #f6e7a8;border-left:none;top:189px;height:72px"></div>
<svg class="abs" style="left:56px;top:106px;overflow:visible" width="16" height="16" viewBox="0 0 16 16"><path d="M1.500 9V6.500C1.500 4 3 3.500 6 3.500" fill="none" stroke="#222" stroke-width="1.300"/><path d="M8.500 3.500L5.500 1.200V5.800Z" fill="#222"/><path d="M9.500 1.500H15.500M12.500 1.500V9" stroke="#444" stroke-width="2"/><rect x="1" y="11" width="14" height="4.500" rx="1.200" fill="#eee" stroke="#333" stroke-width="1.300"/><path d="M3 13.200H8M10 13.200H12" stroke="#333" stroke-width="1"/></svg>
<div class="abs" style="left:70px;top:126px;font-size:12px;line-height:14px;color:#333;white-space:nowrap;transform-origin:0 0;transform:rotate(90deg);letter-spacing:.5px">图库</div>
<svg class="abs" style="left:57px;top:191px;overflow:visible" width="12" height="16" viewBox="0 0 12 16"><rect x=".5" y=".5" width="11" height="14" fill="#fafbfd" stroke="#888" stroke-width="1"/><rect x="2" y="2" width="8" height="6" fill="#3a6fb5"/><path d="M2 10.500H10M2 12.500H10" stroke="#666" stroke-width=".9"/></svg>
<div class="abs" style="left:70px;top:212px;font-size:12px;line-height:14px;color:#333;white-space:nowrap;transform-origin:0 0;transform:rotate(90deg);letter-spacing:.5px">特性</div>
<div id="tabs"></div>
<div class="abs" style="left:76px;top:664px;width:13px;height:13px;background:#e9e9e9"></div>
<svg class="abs" style="left:76px;top:664px" width="13" height="13"><path d="M4 3.500V9.500M9.500 3L5.500 6.500L9.500 10Z" fill="#333" stroke="#333" stroke-width="1"/></svg>
<div class="abs" style="left:92px;top:664px;width:13px;height:13px;background:#e9e9e9"></div>
<svg class="abs" style="left:92px;top:664px" width="13" height="13"><path d="M8.500 3L4.500 6.500L8.500 10Z" fill="#333" stroke="#333" stroke-width="1"/></svg>
<div class="abs" style="left:108px;top:664px;width:13px;height:13px;background:#e9e9e9"></div>
<svg class="abs" style="left:108px;top:664px" width="13" height="13"><path d="M4.500 3L8.500 6.500L4.500 10Z" fill="#333" stroke="#333" stroke-width="1"/></svg>
<div class="abs" style="left:124px;top:664px;width:13px;height:13px;background:#e9e9e9"></div>
<svg class="abs" style="left:124px;top:664px" width="13" height="13"><path d="M9 3.500V9.500M3.500 3L7.500 6.500L3.500 10Z" fill="#333" stroke="#333" stroke-width="1"/></svg>
<svg class="abs" style="left:141px;top:661px" width="52" height="17" viewBox="0 0 52 17"><defs><linearGradient id="gtab" x1="0" y1="0" x2="0" y2="1"><stop offset="0" stop-color="#fff"/><stop offset=".7" stop-color="#fff"/><stop offset="1" stop-color="#d8dce6"/></linearGradient></defs><path d="M2 0H48L36 16H5Q2 16 2 13Z" fill="url(#gtab)"/></svg>
<div class="abs" style="left:151px;top:661px;font-size:13px;line-height:18px;font-weight:bold;color:#111">模型</div>
<div id="dark"></div>
<div class="abs" style="left:0;top:678px;width:34px;height:25px;background:#ececec;border-bottom:1px solid #d6cfb4"></div>
<div class="abs" style="left:4px;top:683px;width:2px;height:14px;background:repeating-linear-gradient(#333 0 2px,transparent 2px 4px)"></div>
<div id="cmd"></div>
<div class="abs" style="left:9px;top:704px;font-size:13px;line-height:23px;color:#111">命令:</div>
<div class="abs" style="left:859px;top:704px;width:507px;height:24px;background:linear-gradient(#cfcfcf,#b4b4b4 50%,#a2a2a2);border-left:2px solid #222"></div>
<div class="abs" style="left:874px;top:704px;font-size:13px;line-height:23px;color:#111">空命令</div>
<div class="abs" style="left:976px;top:704px;font-size:11.500px;line-height:23px;color:#111;letter-spacing:-.2px">X:-12.683, Y:55.441</div>
<div class="abs" style="left:1163px;top:704px;font-size:13px;line-height:23px;color:#111">正交</div><div id="task"></div>
<div class="abs" style="left:79px;top:729px;width:58px;height:39px;background:rgba(255,255,255,.22);border:1px solid rgba(255,255,255,.35)"></div>
<div class="abs" style="left:264px;top:729px;width:59px;height:39px;background:rgba(255,255,255,.22);border:1px solid rgba(255,255,255,.35)"></div>
<div class="abs" style="left:327px;top:729px;width:54px;height:39px;background:rgba(255,255,255,.38);border:1px solid rgba(255,255,255,.75)"></div>
<div class="abs" style="left:381px;top:729px;width:5px;height:39px;background:rgba(255,255,255,.3);border:1px solid rgba(255,255,255,.7)"></div>
<svg class="abs" style="left:26px;top:729px" width="40" height="38" viewBox="0 0 40 38">
<defs><linearGradient id="gie" x1="0" y1="0" x2="0" y2="1"><stop offset="0" stop-color="#6fd0f8"/><stop offset="1" stop-color="#1a86d8"/></linearGradient></defs>
<path d="M20 5C11 5 5 11.500 5 20C5 28.500 11 34.500 20 34.500C27 34.500 32 31 34 25H25.500C24.500 27 22.500 28 20 28C16 28 13.500 25.500 13.200 22H34.800C35.500 12 29.500 5 20 5ZM13.300 17C14 13.500 16.500 11.500 20 11.500C23.500 11.500 26 13.500 26.500 17Z" fill="url(#gie)"/>
<path d="M9 32.500C0 30 4 14 22 4.500C31 .5 36.500 3 33.500 10" fill="none" stroke="#f2b211" stroke-width="2.800" stroke-linecap="round"/><path d="M6 27C5 19 14 9 25 4" fill="none" stroke="#fbe07a" stroke-width="1"/>
</svg>
<svg class="abs" style="left:91px;top:733px" width="34" height="32" viewBox="0 0 34 32">
<path d="M1 4Q1 2 3 2H12L14 5H30Q32 5 32 7V28H1Z" fill="#f2cf62"/>
<rect x="4" y="3" width="8" height="3" fill="#fff"/><rect x="14" y="6" width="8" height="3" fill="#fff"/><rect x="22" y="8" width="8" height="3" fill="#fff"/>
<rect x="4" y="3" width="3" height="2" fill="#2aa840"/><rect x="14" y="6" width="3" height="2" fill="#d03a2a"/><rect x="23" y="8" width="3" height="2" fill="#2a7ad8"/>
<path d="M1 11H32V28H1Z" fill="#f8e08a"/>
<path d="M5 30V20Q5 17 8 17H25Q28 17 28 20V30H22V23H11V30Z" fill="#5cb8ec" stroke="#2a8ad0" stroke-width="1"/>
</svg>
<svg class="abs" style="left:153px;top:731px" width="34" height="33" viewBox="0 0 34 33">
<defs><linearGradient id="gqb" x1="0" y1="0" x2="0" y2="1"><stop offset="0" stop-color="#1a7ae8"/><stop offset="1" stop-color="#4ab4f4"/></linearGradient></defs>
<circle cx="16" cy="16" r="11.500" fill="none" stroke="url(#gqb)" stroke-width="8"/>
<path d="M14 31Q9 31 10 26.500Q11 23 15 24Q17 18 23 19.500Q28 21 27.500 25Q32 25 32 28.500Q32 31 28 31Z" fill="#fff"/>
</svg>
<svg class="abs" style="left:218px;top:733px" width="30" height="30" viewBox="0 0 30 30">
<circle cx="15" cy="15" r="14.500" fill="#dd4b3e"/>
<path d="M15 15L2.440 7.750A14.500 14.500 0 0 0 15 29.500L22 19Z" fill="#4aae48"/>
<path d="M15 15H29.300A14.500 14.500 0 0 1 15 29.500L21.500 18Z" fill="#fbd038"/>
<path d="M15 8H27.700A14.500 14.500 0 0 1 29.500 15A14.500 14.500 0 0 1 15 29.500L21.500 18.500Z" fill="#fbd038"/>
<circle cx="15" cy="15" r="6.800" fill="#fff"/><circle cx="15" cy="15" r="5.300" fill="#3a7ed8"/>
</svg>
<svg class="abs" style="left:278px;top:732px" width="32" height="32" viewBox="0 0 32 32">
<rect width="32" height="32" fill="#b8bcb0"/><path d="M0 0H14L0 22Z" fill="#4a4a48"/><path d="M14 0H32V32H24Z" fill="#e8eae4"/>
<path d="M2 32L8 14L14 8L18 32Z" fill="#d8dcd8"/>
<ellipse cx="17.500" cy="11" rx="6" ry="7.500" fill="#d8a888"/><path d="M11 7Q13 1 19 1.500Q25 2 24 9Q20 4 11 7Z" fill="#2a2420"/>
<rect x="12" y="8" width="10" height="3" rx="1.200" fill="#4a3a58"/>
<path d="M7 32Q8 22 14 20L17 24L21 20Q28 22 28 32Z" fill="#e8e8ea"/><path d="M14 20L17 26L21 20Z" fill="#c89878"/>
</svg>
<svg class="abs" style="left:337px;top:732px" width="33" height="33" viewBox="0 0 33 33">
<defs><linearGradient id="gcx" x1="0" y1="0" x2="0" y2="1"><stop offset="0" stop-color="#2f8ce6"/><stop offset="1" stop-color="#0b56b4"/></linearGradient></defs>
<rect width="33" height="33" rx="2.500" fill="url(#gcx)"/>
<circle cx="15" cy="15" r="7.500" fill="none" stroke="#fff" stroke-width="3"/><circle cx="15" cy="15" r="3.600" fill="#1a72d8"/>
<path d="M3 3L25 28M3 28L26 3" stroke="#fff" stroke-width="2.200"/>
<path d="M20 3.500A14 14 0 0 1 29 14" stroke="#fff" stroke-width="2.400" fill="none"/>
<text x="18.500" y="31" font-family="Liberation Sans,sans-serif" font-weight="bold" font-size="14" fill="#ffee00">M</text>
</svg>
<svg class="abs" style="left:1049px;top:745px" width="9" height="6" viewBox="0 0 9 6"><path d="M0 6L4.500 0L9 6Z" fill="#fff"/></svg>
<svg class="abs" style="left:1070px;top:739px" width="18" height="18" viewBox="0 0 18 18">
<ellipse cx="8" cy="6" rx="4.500" ry="5" fill="#1a1a1a"/><ellipse cx="8" cy="12" rx="6" ry="5" fill="#1a1a1a"/><ellipse cx="8" cy="12.500" rx="3.800" ry="3.800" fill="#fff"/>
<path d="M3 9.500Q8 12 13 9.500L13 11.500Q8 13.500 3 11.500Z" fill="#e03020"/><ellipse cx="8" cy="7.800" rx="2.200" ry="1" fill="#f4a020"/>
<ellipse cx="6.500" cy="5" rx="1" ry="1.500" fill="#fff"/><ellipse cx="9.500" cy="5" rx="1" ry="1.500" fill="#fff"/>
<circle cx="13" cy="13.500" r="4.200" fill="#f4a020" stroke="#fff" stroke-width=".8"/><path d="M10.800 12.500H15.200M10.800 14.500H15.200" stroke="#fff" stroke-width="1.100"/></svg>
<svg class="abs" style="left:1094px;top:739px" width="18" height="19" viewBox="0 0 18 19"><path d="M2.500 1V18" stroke="#fff" stroke-width="1.600"/><path d="M3.500 2Q6 .5 8.500 2T13.500 2V10Q11 11.500 8.500 10T3.500 10Z" fill="none" stroke="#fff" stroke-width="1.300"/><circle cx="12" cy="13" r="4.500" fill="#e02a20" stroke="#fff" stroke-width=".8"/><path d="M10 11L14 15M14 11L10 15" stroke="#fff" stroke-width="1.400"/></svg>
<svg class="abs" style="left:1118px;top:739px" width="20" height="19" viewBox="0 0 20 19"><path d="M2 1V5M6 1V5M1 5H7V9H5V17H3V9H1Z" fill="#fff" stroke="#fff" stroke-width=".8"/><rect x="10" y="3" width="8" height="14" rx="1" fill="none" stroke="#fff" stroke-width="1.500"/><rect x="12.500" y="1" width="3" height="2" fill="#fff"/><rect x="11.500" y="5" width="5" height="10.500" fill="#fff"/></svg>
<svg class="abs" style="left:1142px;top:739px" width="20" height="19" viewBox="0 0 20 19"><rect x="6" y="3" width="12" height="9" fill="none" stroke="#fff" stroke-width="1.400"/><path d="M12 12V15.500M8 16H16" stroke="#fff" stroke-width="1.400"/><rect x="1" y="1" width="5" height="7" rx="1" fill="#b18191" stroke="#fff" stroke-width="1.300"/><path d="M3.500 8V13Q3.500 15 6 15H9" fill="none" stroke="#fff" stroke-width="1.300"/><path d="M2.500 3.500H4.500M2.500 5.500H4.500" stroke="#fff" stroke-width=".8"/></svg>
<svg class="abs" style="left:1167px;top:739px" width="18" height="19" viewBox="0 0 18 19"><path d="M1 7H4L8 3V16L4 12H1Z" fill="#fff"/><path d="M10 7Q11.500 9.500 10 12M12 5Q14.500 9.500 12 14M14 3Q18 9.500 14 16" fill="none" stroke="#fff" stroke-width="1.200"/></svg>
<div class="abs" style="left:1195px;top:738px;width:16px;font-size:14px;line-height:20px;color:#fff;font-weight:500">中</div>
<svg class="abs" style="left:1223px;top:741px" width="15" height="15" viewBox="0 0 15 15"><rect x=".5" y=".5" width="14" height="14" rx="1" fill="#e84a10" stroke="#fff" stroke-width="1"/><text x="7.500" y="12" text-anchor="middle" font-family="Liberation Sans,sans-serif" font-weight="bold" font-size="12" fill="#fff">S</text></svg>
<div class="abs" style="left:1238px;top:731px;width:90px;text-align:center;font-size:13px;line-height:17px;color:#fff">21:52</div>
<div class="abs" style="left:1238px;top:750px;width:90px;text-align:center;font-size:13px;line-height:17px;color:#fff">2014/12/18</div>
<svg class="abs" style="left:1322px;top:735px" width="28" height="26" viewBox="0 0 28 26"><path d="M8 9Q4 6 6 2Q7 6 12 5.500" fill="none" stroke="#fff" stroke-width="1.600"/><path d="M7 23Q2 23 2 18.500Q2 14 7 14Q8 8 14 8.500Q19 9 19.500 14Q25 14 25 18.500Q25 23 20 23Z" fill="none" stroke="#fff" stroke-width="1.700"/></svg>
<div class="abs" style="left:1196px;top:702px;width:170px;height:24px;background:#fff;border-radius:4px 0 0 4px;box-shadow:0 1px 2px rgba(0,0,0,.35)"></div>
<svg class="abs" style="left:1180px;top:698px" width="29" height="28" viewBox="0 0 29 28"><rect x="1" y="2" width="26" height="25" rx="5" transform="rotate(-12 14 14)" fill="#f4501a"/><text x="14" y="23" text-anchor="middle" font-family="Liberation Sans,sans-serif" font-weight="bold" font-size="24" fill="#fff" transform="rotate(-8 14 14) scale(1.150 1) translate(-1.800 0)">S</text></svg>
<div class="abs" style="left:1213px;top:703px;font-size:16px;line-height:22px;font-weight:bold;color:#1a6fd8">中</div>
<svg class="abs" style="left:1237px;top:706px" width="14" height="15" viewBox="0 0 14 15"><path d="M8.500 .5Q15 5 11.500 11.500Q7 16 .5 12.500Q7 12 8.300 7Q9 3.500 8.500 .5Z" fill="#1a6fd8" stroke="#1a6fd8" stroke-width=".8"/></svg>
<svg class="abs" style="left:1258px;top:708px" width="14" height="13" viewBox="0 0 14 13"><circle cx="3" cy="3.500" r="1.800" fill="none" stroke="#1a6fd8" stroke-width="1.300"/><path d="M8.500 5.500Q12 5 11 8.500Q10 11 8 11.500Q9.800 9.500 9 8.500Q7.500 8 8.500 5.500Z" fill="#1a6fd8"/></svg>
<svg class="abs" style="left:1279px;top:708px" width="17" height="12" viewBox="0 0 17 12"><rect x=".5" y=".5" width="16" height="11" rx="1.500" fill="#1a6fd8"/><path d="M2.500 3.200H14.500M2.500 5.700H14.500" stroke="#fff" stroke-width="1.300" stroke-dasharray="1.500 1.500"/><path d="M4 8.500H13" stroke="#fff" stroke-width="1.300"/></svg>
<svg class="abs" style="left:1302px;top:705px" width="17" height="17" viewBox="0 0 17 17"><circle cx="8" cy="4.500" r="3.300" fill="#c8ccd4"/><path d="M1.500 15Q1.500 8.500 8 8.500Q11 8.500 12 10V15Z" fill="#c8ccd4"/><rect x="9.500" y="9.500" width="6.500" height="6.500" fill="#fff" stroke="#a0a6b2" stroke-width="1"/><path d="M11.500 12H14M11.500 14H13" stroke="#8a90a0" stroke-width=".8"/></svg>
<svg class="abs" style="left:1323px;top:706px" width="16" height="15" viewBox="0 0 16 15"><path d="M5 .5Q8 3 11 .5L15.500 3.500L13.500 7L11.800 6V14.500H4.200V6L2.500 7L.5 3.500Z" fill="#1a6fd8"/></svg>
<svg class="abs" style="left:1344px;top:705px" width="16" height="17" viewBox="0 0 16 17"><path d="M15 4.500Q15 8.500 11 8.500Q10 8.500 9.300 8.200L3.500 15.500Q2 16.500 1 15.200Q.3 14 1.500 13L8 6.500Q7.500 3.500 9.500 1.800Q11.500 .5 13 1L10.500 3.800L12.500 5.800Z" fill="#1a6fd8"/></svg>
<svg class="abs" style="left:1215px;top:455px" width="135" height="75" viewBox="0 0 135 75">
<defs><linearGradient id="gw" x1="0" y1="0" x2="0" y2="1"><stop offset="0" stop-color="#515155"/><stop offset="1" stop-color="#37373a"/></linearGradient>
<linearGradient id="garc" x1="0" y1="0" x2="0" y2="1"><stop offset="0" stop-color="#22e02a"/><stop offset=".55" stop-color="#b4e030"/><stop offset="1" stop-color="#f8c820"/></linearGradient>
<filter id="fsh" x="-20%" y="-20%" width="140%" height="140%"><feGaussianBlur stdDeviation="1.600"/></filter></defs>
<g opacity=".35" filter="url(#fsh)"><rect x="40" y="16" width="85" height="42" rx="21" fill="#000"/><circle cx="38" cy="37" r="30" fill="#000"/></g>
<rect x="40" y="16" width="85" height="41" rx="20.500" fill="url(#gw)" stroke="#2e2e30" stroke-width="1"/>
<path d="M68 36.500H120" stroke="#5a5a5e" stroke-width="1"/>
<circle cx="38" cy="36.500" r="29.500" fill="url(#gw)" stroke="#3e3e42" stroke-width="1.500"/>
<path d="M38.500 11A25.500 25.500 0 0 1 55 56" fill="none" stroke="url(#garc)" stroke-width="1.800" stroke-linecap="round"/>
<text x="18" y="46" font-family="Liberation Sans,sans-serif" font-size="28" fill="#fff" textLength="28" lengthAdjust="spacingAndGlyphs" style="font-weight:100" stroke="#3f3f43" stroke-width=".9">39</text>
<text x="47.500" y="48" font-family="Liberation Sans,sans-serif" font-size="10.500" fill="#fff">%</text>
<path d="M71 21L74.500 25H72.500V29.500H69.500V25H67.500Z" fill="#f09a20"/>
<path d="M71 50.500L74.500 46.500H72.500V42H69.500V46.500H67.500Z" fill="#3ab81e"/>
<text x="103" y="30.500" text-anchor="end" font-family="Liberation Sans,sans-serif" font-size="11" fill="#fff">0</text><text x="103.500" y="30.500" font-family="Liberation Sans,sans-serif" font-size="9.500" fill="#ccc">K/s</text>
<text x="103" y="52" text-anchor="end" font-family="Liberation Sans,sans-serif" font-size="11" fill="#fff">6.4</text><text x="103.500" y="52" font-family="Liberation Sans,sans-serif" font-size="9.500" fill="#ccc">K/s</text>
</svg></body>
</html>
